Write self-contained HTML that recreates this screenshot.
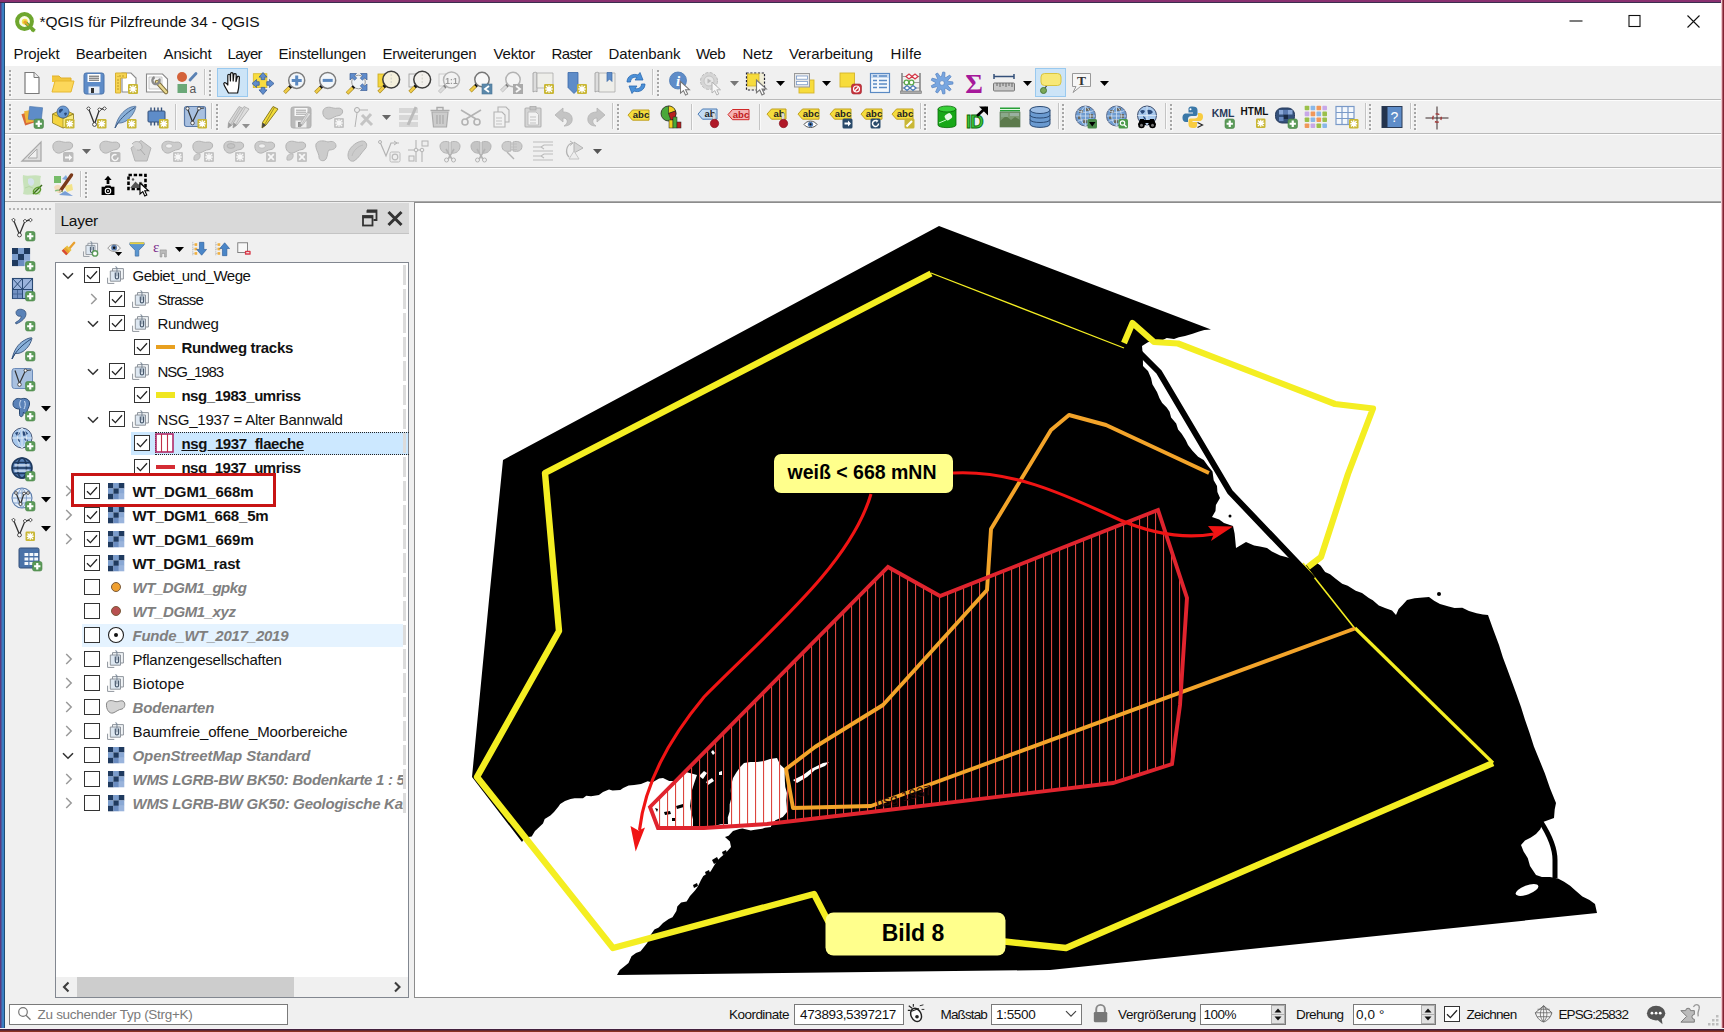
<!DOCTYPE html>
<html lang="de">
<head>
<meta charset="utf-8">
<title>QGIS für Pilzfreunde 34 - QGIS</title>
<style>
*{box-sizing:border-box;margin:0;padding:0}
html,body{width:1724px;height:1032px;overflow:hidden;background:#fff}
body{position:relative;font-family:"Liberation Sans","DejaVu Sans",sans-serif;font-size:15px;color:#000}
.abs{position:absolute}
svg{overflow:visible}
.tx{position:absolute;white-space:nowrap;color:#111}
#deskL{left:0;top:0;width:5px;height:1032px;background:linear-gradient(90deg,#5a3a80 0,#5a3a80 1.300px,#3a7cc0 1.700px,#3a80c4 3.700px,#1e4c74 4px,#1e4c74 4.600px,#d8ecf8 5px)}
#deskL2{left:0;top:0;width:0;height:0}
#deskT{left:0;top:0;width:1724px;height:3px;background:linear-gradient(#8a3070 0,#8a3070 1.800px,#3a2e50 2.100px,#3a2e50 2.800px,#e8e8f0 3px)}
#deskR{left:1721px;top:0;width:3px;height:1032px;background:linear-gradient(90deg,#f4dce0 0,#e8b0b8 1.200px,#8a2838 1.700px,#7a2030 3px)}
#deskR2{left:0;top:0;width:0;height:0}
#deskB{left:0;top:1028px;width:1724px;height:4px;background:linear-gradient(#f6f0f4 0,#f6f0f4 .800px,#3e2140 1.200px,#4a2238 2.200px,#8a3222 3px,#8a3222 4px)}
#title{left:5px;top:3px;width:1716px;height:37px;background:#fff}
#menu{left:5px;top:40px;width:1716px;height:26px;background:#fff}
.tb{left:5px;width:1716px;background:#f0f0f0}
#tb1{top:66px;height:33px}
#tb2{top:99px;height:34px;border-top:1px solid #b9b9b9;background:linear-gradient(#fdfdfd 0,#fdfdfd 1px,#f0f0f0 1px)}
#tb3{top:133px;height:34px;border-top:1px solid #b9b9b9;background:linear-gradient(#fdfdfd 0,#fdfdfd 1px,#f0f0f0 1px)}
#tb4{top:167px;height:35px;border-top:1px solid #b9b9b9;border-bottom:1px solid #a8a8a8;background:linear-gradient(#fdfdfd 0,#fdfdfd 1px,#f0f0f0 1px)}
.hd{width:2px;background:repeating-linear-gradient(#a6a6a6 0,#a6a6a6 1.700px,transparent 1.700px,transparent 4px);box-shadow:1px 1px 0 rgba(255,255,255,.55)}
.hdh{height:2px;background:repeating-linear-gradient(90deg,#b4b4b4 0,#b4b4b4 2px,transparent 2px,transparent 4px)}
.sel{background:#cce4f7;border:1px solid #99c9ef}
#main{left:5px;top:202px;width:1716px;height:796px;background:#f0f0f0}
#lyhead{left:55px;top:203px;width:354px;height:31px;background:#d9d9d9;border-bottom:1px solid #c4c4c4}
#tree{left:55px;top:262px;width:354px;height:736px;background:#fff;border:1px solid #828790}
#treeclip{left:56px;top:263px;width:346.500px;height:712px;overflow:hidden}
#treeclip>*{margin-left:-56px;margin-top:-263px}
#indic{left:403px;top:265px;width:3px;height:550px;background:repeating-linear-gradient(#dcdcdc 0,#dcdcdc 20px,transparent 20px,transparent 24px)}
#hsb{left:56px;top:977px;width:352px;height:20px;background:#f0f0f0}
.cb{width:16px;height:16px;background:#fff;border:1px solid #333}
#map{left:414px;top:202px;width:1307px;height:796px;background:#fff;border:1px solid #8c8c8c;border-right:none;overflow:hidden}
#status{left:5px;top:998px;width:1716px;height:31px;background:#f0f0f0}
.box{background:#fff;border:1px solid #7a7a7a}
</style>
</head>
<body>
<div class="abs" id="title"></div>
<svg class="abs" style="left:14.500px;top:11.800px" width="22" height="20" viewBox="0 0 22 20"><circle cx="9.500" cy="9.500" r="7.400" fill="#fbfbe8" stroke="#6ea62e" stroke-width="4"/><circle cx="9.800" cy="9.800" r="3" fill="#f2e24a"/><circle cx="10.200" cy="10.200" r="1.800" fill="#eaa22a"/><path d="M11,11 L19.500,19.200" stroke="#6ea62e" stroke-width="3.800"/><path d="M16,16 v3.200 h4.500z" fill="#6ea62e"/><path d="M10.500,10.500 L13.500,13.500" stroke="#eaa22a" stroke-width="1.600"/></svg>
<span class="tx " style="left:39.5px;top:11.8px;height:20px;line-height:20px;font-size:15.500px;letter-spacing:-0.101px;">*QGIS für Pilzfreunde 34 - QGIS</span>
<svg class="abs" style="left:1560px;top:8px" width="150" height="26" viewBox="0 0 150 26"><path d="M9.500,13h13" stroke="#111" stroke-width="1.100"/><rect x="69" y="7.500" width="11" height="11" fill="none" stroke="#111" stroke-width="1.100"/><path d="M127.500,7.500l12,12M139.500,7.500l-12,12" stroke="#111" stroke-width="1.100"/></svg>
<div class="abs" id="menu"></div>
<span class="tx " style="left:13.6px;top:43.5px;height:20px;line-height:20px;font-size:15px;letter-spacing:-0.113px;">Projekt</span>
<span class="tx " style="left:75.7px;top:43.5px;height:20px;line-height:20px;font-size:15px;letter-spacing:-0.126px;">Bearbeiten</span>
<span class="tx " style="left:163.6px;top:43.5px;height:20px;line-height:20px;font-size:15px;letter-spacing:-0.186px;">Ansicht</span>
<span class="tx " style="left:227.6px;top:43.5px;height:20px;line-height:20px;font-size:15px;letter-spacing:-0.626px;">Layer</span>
<span class="tx " style="left:278.5px;top:43.5px;height:20px;line-height:20px;font-size:15px;letter-spacing:-0.198px;">Einstellungen</span>
<span class="tx " style="left:382.5px;top:43.5px;height:20px;line-height:20px;font-size:15px;letter-spacing:-0.210px;">Erweiterungen</span>
<span class="tx " style="left:493.5px;top:43.5px;height:20px;line-height:20px;font-size:15px;letter-spacing:-0.172px;">Vektor</span>
<span class="tx " style="left:551.5px;top:43.5px;height:20px;line-height:20px;font-size:15px;letter-spacing:-0.615px;">Raster</span>
<span class="tx " style="left:608.5px;top:43.5px;height:20px;line-height:20px;font-size:15px;letter-spacing:-0.062px;">Datenbank</span>
<span class="tx " style="left:696px;top:43.5px;height:20px;line-height:20px;font-size:15px;letter-spacing:-0.526px;">Web</span>
<span class="tx " style="left:742.5px;top:43.5px;height:20px;line-height:20px;font-size:15px;letter-spacing:-0.086px;">Netz</span>
<span class="tx " style="left:789px;top:43.5px;height:20px;line-height:20px;font-size:15px;letter-spacing:-0.090px;">Verarbeitung</span>
<span class="tx " style="left:890.5px;top:43.5px;height:20px;line-height:20px;font-size:15px;letter-spacing:0.297px;">Hilfe</span>
<div class="abs tb" id="tb1"></div><div class="abs tb" id="tb2"></div><div class="abs tb" id="tb3"></div><div class="abs tb" id="tb4"></div>
<div class="abs hd" style="left:9.3px;top:70.3px;height:26px"></div>
<svg class="abs" style="left:20px;top:70.5px" width="24" height="24" viewBox="0 0 24 24"><path d="M5,1.5 h9 l5,5 v16 h-14z" fill="#fff" stroke="#7a7a7a" stroke-width="1.2"/><path d="M14,1.5 v5 h5" fill="#eee" stroke="#7a7a7a" stroke-width="1"/></svg>
<svg class="abs" style="left:51px;top:70.5px" width="24" height="24" viewBox="0 0 24 24"><path d="M1,5 h7 l2,2 h10 v4 h-19z" fill="#f2c63c"/><path d="M1,5 h7 l2,2 h10 v3" fill="none" stroke="#e0b02c" stroke-width="1"/><path d="M1,21 l3,-11 h19 l-3,11z" fill="#fcd75a" stroke="#e6b830" stroke-width="1"/></svg>
<svg class="abs" style="left:82px;top:70.5px" width="24" height="24" viewBox="0 0 24 24"><rect x="2" y="2" width="20" height="21" rx="2.2" fill="#5e8cc8" stroke="#4a73aa" stroke-width="1"/><rect x="5.5" y="3" width="13" height="8" fill="#fff"/><path d="M7,5.2h10M7,7.2h10M7,9.2h10" stroke="#555" stroke-width="1"/><rect x="6.5" y="15.5" width="11" height="7" fill="#e8eef6"/><rect x="9" y="17" width="3" height="5" fill="#333"/></svg>
<svg class="abs" style="left:113.5px;top:70.5px" width="24" height="24" viewBox="0 0 24 24"><path d="M8,2 h9 l5,5 v14 h-14z" fill="#fff" stroke="#8a8a8a" stroke-width="1.1"/><path d="M1.5,2 h11 v5 h-6 v15 h-5z" fill="#f6d452" stroke="#d8b030" stroke-width="1"/><path d="M4,5v1M4,8v0M3,9h2M3,12h2M3,15h2M3,18h2M6,4v2M9,4v2" stroke="#b08a20" stroke-width=".8"/><rect x="14" y="13" width="10" height="10" rx="1.2" fill="#c9b735"/><path d="M19,14.3 v7.4 M15.3,18 h7.4 M16,15 l6,6 M22,15 l-6,6" stroke="#fff" stroke-width="1.3" fill="none"/></svg>
<svg class="abs" style="left:144.5px;top:70.5px" width="24" height="24" viewBox="0 0 24 24"><path d="M1.5,3 h16 l5,5 v13 h-21z" fill="#fff" stroke="#8a8a8a" stroke-width="1.1"/><path d="M4,6h13v12h-13z" fill="#f4f4f4" stroke="#bbb" stroke-width=".8"/><path d="M12,11 L21,21" stroke="#7a6a3a" stroke-width="4.4" stroke-linecap="round"/><path d="M12,11 L21,21" stroke="#e8d890" stroke-width="2.6" stroke-linecap="round"/><circle cx="11" cy="9.5" r="3.6" fill="none" stroke="#8a8a8a" stroke-width="2.4" stroke-dasharray="17 6" transform="rotate(-30 11 9.5)"/></svg>
<svg class="abs" style="left:175px;top:70.5px" width="24" height="24" viewBox="0 0 24 24"><circle cx="7" cy="6" r="5" fill="#d4623a"/><path d="M15,9 L21,2.5" stroke="#5a82b4" stroke-width="2.8" stroke-linecap="round"/><rect x="2.5" y="13" width="9.5" height="9" fill="#6aa878"/><text x="14.5" y="22" font-size="12" font-family="Liberation Sans,sans-serif" fill="#555">a</text></svg>
<div class="abs" style="left:204px;top:69px;width:1px;height:26px;background:#c4c4c4"></div><div class="abs" style="left:205px;top:69px;width:1px;height:26px;background:#fafafa"></div>
<div class="abs hd" style="left:209.3px;top:70.3px;height:26px"></div>
<div class="abs sel" style="left:217px;top:68px;width:31px;height:29px"></div>
<svg class="abs" style="left:220.5px;top:70.5px" width="24" height="24" viewBox="0 0 24 24"><path d="M7.5,22 C5,17 2.5,14 2.8,12.4 C3.3,11 5,11.5 6.8,14 L6.8,4.6 C6.8,2.8 9.2,2.8 9.2,4.6 L9.4,10 L9.6,3 C9.6,1.2 12,1.2 12,3 L12.2,10 L12.8,3.8 C12.9,2 15.3,2.2 15.2,4 L15,10.6 L16.2,6.2 C16.6,4.6 18.8,5.2 18.4,7 C17.8,11 18.6,14 16.6,22 Z" fill="#fff" stroke="#111" stroke-width="1.2" stroke-linejoin="round"/></svg>
<svg class="abs" style="left:251px;top:70.5px" width="24" height="24" viewBox="0 0 24 24"><rect x="2.300" y="2.700" width="13.600" height="13.900" fill="#f8dc3e" stroke="#d8b82a" stroke-width=".8"/><path transform="rotate(0 12 12.500)" d="M12,1.500 l4,4.600 h-2.200 v2.600 h-3.600 v-2.600 h-2.200z" fill="#5f8ccc" stroke="#3c5f96" stroke-width=".8"/><path transform="rotate(90 12 12.500)" d="M12,1.500 l4,4.600 h-2.200 v2.600 h-3.600 v-2.600 h-2.200z" fill="#5f8ccc" stroke="#3c5f96" stroke-width=".8"/><path transform="rotate(180 12 12.500)" d="M12,1.500 l4,4.600 h-2.200 v2.600 h-3.600 v-2.600 h-2.200z" fill="#5f8ccc" stroke="#3c5f96" stroke-width=".8"/><path transform="rotate(270 12 12.500)" d="M12,1.500 l4,4.600 h-2.200 v2.600 h-3.600 v-2.600 h-2.200z" fill="#5f8ccc" stroke="#3c5f96" stroke-width=".8"/><rect x="9" y="9.500" width="6" height="6" fill="#f8dc3e"/></svg>
<svg class="abs" style="left:282px;top:70.5px" width="24" height="24" viewBox="0 0 24 24"><path d="M9.38,14.72 L7.18,16.92" stroke="#111" stroke-width="3.400" stroke-linecap="butt"/><path d="M7.38,16.72 L2.48,21.62" stroke="#a88a20" stroke-width="3.600" stroke-linecap="butt"/><path d="M7.38,16.72 L2.78,21.32" stroke="#f0cc48" stroke-width="2.400" stroke-linecap="butt"/><circle cx="14.7" cy="9.4" r="8" fill="#f2f6fa" stroke="#7c7c7c" stroke-width="1.500"/><path d="M9.700,9.400h10M14.700,4.400v10" stroke="#5a88c0" stroke-width="3"/></svg>
<svg class="abs" style="left:313px;top:70.5px" width="24" height="24" viewBox="0 0 24 24"><path d="M9.38,14.72 L7.18,16.92" stroke="#111" stroke-width="3.400" stroke-linecap="butt"/><path d="M7.38,16.72 L2.48,21.62" stroke="#a88a20" stroke-width="3.600" stroke-linecap="butt"/><path d="M7.38,16.72 L2.78,21.32" stroke="#f0cc48" stroke-width="2.400" stroke-linecap="butt"/><circle cx="14.7" cy="9.4" r="8" fill="#f2f6fa" stroke="#7c7c7c" stroke-width="1.500"/><path d="M9.700,9.400h10" stroke="#5a88c0" stroke-width="3"/></svg>
<svg class="abs" style="left:344.5px;top:70.5px" width="24" height="24" viewBox="0 0 24 24"><circle cx="13.500" cy="11" r="6.800" fill="#eef2f6" stroke="#9a9a9a" stroke-width="1"/><path transform="rotate(0 13.500 11)" d="M5,2.500 h6.500 l-2.200,2.200 l2.400,2.400 l-2.100,2.100 l-2.400,-2.400 l-2.200,2.200z" fill="#5f8ccc" stroke="#3c5f96" stroke-width=".7"/><path transform="rotate(90 13.500 11)" d="M5,2.500 h6.500 l-2.200,2.200 l2.400,2.400 l-2.100,2.100 l-2.400,-2.400 l-2.200,2.200z" fill="#5f8ccc" stroke="#3c5f96" stroke-width=".7"/><path transform="rotate(180 13.500 11)" d="M5,2.500 h6.500 l-2.200,2.200 l2.400,2.400 l-2.100,2.100 l-2.400,-2.400 l-2.200,2.200z" fill="#5f8ccc" stroke="#3c5f96" stroke-width=".7"/><path d="M9,15.500 L7.500,17" stroke="#111" stroke-width="3.400"/><path d="M7.600,16.900 L2,22.500" stroke="#a88a20" stroke-width="3.600"/><path d="M7.600,16.900 L2.300,22.200" stroke="#f0cc48" stroke-width="2.400"/></svg>
<svg class="abs" style="left:375.5px;top:70.5px" width="24" height="24" viewBox="0 0 24 24"><rect x="2" y="3" width="11" height="13" fill="#f4d63e" stroke="#c8a820" stroke-width=".8"/><path d="M9.584,14.216 L7.384,16.416" stroke="#111" stroke-width="3.400" stroke-linecap="butt"/><path d="M7.584,16.216 L2.684,21.116" stroke="#a88a20" stroke-width="3.600" stroke-linecap="butt"/><path d="M7.584,16.216 L2.984,20.816" stroke="#f0cc48" stroke-width="2.400" stroke-linecap="butt"/><circle cx="15.2" cy="8.6" r="8.4" fill="#f4f0dc" stroke="#3c3c3c" stroke-width="1.500"/><path d="M15.200,3v11" stroke="#d0d0c8" stroke-width="1" stroke-dasharray="2 1.500"/></svg>
<svg class="abs" style="left:406.5px;top:70.5px" width="24" height="24" viewBox="0 0 24 24"><rect x="2" y="3" width="11" height="13" fill="#f0f0f0" stroke="#999" stroke-width=".8"/><path d="M9.584,14.216 L7.384,16.416" stroke="#111" stroke-width="3.400" stroke-linecap="butt"/><path d="M7.584,16.216 L2.684,21.116" stroke="#a88a20" stroke-width="3.600" stroke-linecap="butt"/><path d="M7.584,16.216 L2.984,20.816" stroke="#f0cc48" stroke-width="2.400" stroke-linecap="butt"/><circle cx="15.2" cy="8.6" r="8.4" fill="#f2f0ec" stroke="#3c3c3c" stroke-width="1.500"/><path d="M15.200,3v11" stroke="#d0d0c8" stroke-width="1" stroke-dasharray="2 1.500"/></svg>
<svg class="abs" style="left:437px;top:70.5px" width="24" height="24" viewBox="0 0 24 24"><g opacity=".5" style="filter:grayscale(1)"><rect x="2" y="3" width="10" height="12" fill="#f4f4f4" stroke="#999" stroke-width=".8"/><path d="M9.18,14.32 L6.98,16.52" stroke="#111" stroke-width="3.400" stroke-linecap="butt"/><path d="M7.18,16.32 L2.28,21.22" stroke="#a88a20" stroke-width="3.600" stroke-linecap="butt"/><path d="M7.18,16.32 L2.58,20.92" stroke="#f0cc48" stroke-width="2.400" stroke-linecap="butt"/><circle cx="14.5" cy="9" r="8" fill="#f2f6fa" stroke="#7c7c7c" stroke-width="1.500"/><text x="14.5" y="12.500" font-size="8.500" font-weight="bold" text-anchor="middle" font-family="Liberation Sans,sans-serif" fill="#444">1:1</text></g></svg>
<svg class="abs" style="left:468.5px;top:70.5px" width="24" height="24" viewBox="0 0 24 24"><path d="M8.272,13.228 L6.072,15.428" stroke="#111" stroke-width="3.400" stroke-linecap="butt"/><path d="M6.272,15.228 L1.372,20.128" stroke="#a88a20" stroke-width="3.600" stroke-linecap="butt"/><path d="M6.272,15.228 L1.672,19.828" stroke="#f0cc48" stroke-width="2.400" stroke-linecap="butt"/><circle cx="13" cy="8.5" r="7.2" fill="#f8f8f8" stroke="#777" stroke-width="1.500"/><rect x="13" y="13" width="10" height="10" fill="#5a88aa" stroke="#4a7696" stroke-width=".6"/><path d="M20,15 l-4,3 l4,3" stroke="#fff" stroke-width="1.8" fill="none"/></svg>
<svg class="abs" style="left:500px;top:70.5px" width="24" height="24" viewBox="0 0 24 24"><g opacity=".5" style="filter:grayscale(1)"><path d="M8.272,13.228 L6.072,15.428" stroke="#111" stroke-width="3.400" stroke-linecap="butt"/><path d="M6.272,15.228 L1.372,20.128" stroke="#a88a20" stroke-width="3.600" stroke-linecap="butt"/><path d="M6.272,15.228 L1.672,19.828" stroke="#f0cc48" stroke-width="2.400" stroke-linecap="butt"/><circle cx="13" cy="8.5" r="7.2" fill="#f8f8f8" stroke="#777" stroke-width="1.500"/><rect x="13" y="13" width="10" height="10" fill="#3d6f96"/><path d="M16,15 l4,3 l-4,3" stroke="#fff" stroke-width="1.8" fill="none"/></g></svg>
<svg class="abs" style="left:531px;top:70.5px" width="24" height="24" viewBox="0 0 24 24"><path d="M2,2 C4,1 5,1 6,2 V21 C5,20 4,20 2,21z" fill="#ddd" stroke="#999" stroke-width=".8"/><path d="M6,2 h16 v15 h-16z" fill="#eeeeea" stroke="#aaa" stroke-width=".8"/><rect x="13" y="13" width="10" height="10" rx="1.2" fill="#c9b735"/><path d="M18,14.3 v7.4 M14.3,18 h7.4 M15,15 l6,6 M21,15 l-6,6" stroke="#fff" stroke-width="1.3" fill="none"/></svg>
<svg class="abs" style="left:564px;top:70.5px" width="24" height="24" viewBox="0 0 24 24"><path d="M4,1.500 h10 v17 l-4,4 l-6,-6z" fill="#5e8cc8" stroke="#3a68a8" stroke-width=".8"/><rect x="13" y="13" width="10" height="10" rx="1.2" fill="#c9b735"/><path d="M18,14.3 v7.4 M14.3,18 h7.4 M15,15 l6,6 M21,15 l-6,6" stroke="#fff" stroke-width="1.3" fill="none"/></svg>
<svg class="abs" style="left:592.5px;top:70.5px" width="24" height="24" viewBox="0 0 24 24"><path d="M2,2 C4,1 5,1 6,2 V21 C5,20 4,20 2,21z" fill="#ddd" stroke="#999" stroke-width=".8"/><path d="M6,2 h16 v19 h-16z" fill="#eeeeea" stroke="#aaa" stroke-width=".8"/><path d="M14,1.500 h5 v9 l-2.500,-2.500 l-2.500,2.500z" fill="#5e8cc8" stroke="#3a68a8" stroke-width=".7"/></svg>
<svg class="abs" style="left:623.5px;top:70.5px" width="24" height="24" viewBox="0 0 24 24"><path d="M3,11 C3,5 9,2 14,4 L16,1.500 L19,9 L11,9 L13,6.500 C9,5.500 6.500,8 6.500,11z" fill="#4a90d8" stroke="#2a68b0" stroke-width=".8"/><path d="M21,13 C21,19 15,22 10,20 L8,22.500 L5,15 L13,15 L11,17.500 C15,18.500 17.500,16 17.500,13z" fill="#4a90d8" stroke="#2a68b0" stroke-width=".8"/></svg>
<div class="abs" style="left:652px;top:69px;width:1px;height:26px;background:#c4c4c4"></div><div class="abs" style="left:653px;top:69px;width:1px;height:26px;background:#fafafa"></div>
<div class="abs hd" style="left:657.3px;top:70.3px;height:26px"></div>
<svg class="abs" style="left:667.5px;top:70.5px" width="24" height="24" viewBox="0 0 24 24"><circle cx="10" cy="9.500" r="8.500" fill="#5e8cc8" stroke="#4a78b4" stroke-width=".8"/><text x="10" y="15" font-size="15" font-style="italic" font-weight="bold" text-anchor="middle" font-family="Liberation Serif,serif" fill="#fff">i</text><path transform="translate(12.5,10.5) scale(1.05)" d="M0,0 L0,11 L2.800,8.600 L4.800,13 L6.800,12 L4.800,7.800 L8.500,7.800z" fill="#fff" stroke="#777" stroke-width="1"/></svg>
<svg class="abs" style="left:698.5px;top:70.5px" width="24" height="24" viewBox="0 0 24 24"><g opacity=".5" style="filter:grayscale(1)"><circle cx="10" cy="10" r="8.500" fill="#bbb" stroke="#888" stroke-width="1" stroke-dasharray="3 1.500"/><circle cx="10" cy="10" r="5" fill="#ddd" stroke="#999"/><path d="M8.500,7.500v5l4,-2.500z" fill="#888"/><path transform="translate(13,11) scale(1)" d="M0,0 L0,11 L2.800,8.600 L4.800,13 L6.800,12 L4.800,7.800 L8.500,7.800z" fill="#fff" stroke="#777" stroke-width="1"/></g></svg>
<svg class="abs" style="left:745px;top:70.5px" width="24" height="24" viewBox="0 0 24 24"><rect x="1.500" y="2" width="18" height="17" fill="#f0e9b0" fill-opacity=".4" stroke="#223" stroke-width="1.200" stroke-dasharray="2.200 1.600"/><rect x="2.500" y="3" width="11.500" height="12" fill="#f7dc3c" stroke="#d4b428" stroke-width=".8"/><path transform="translate(11.5,9) scale(1.15)" d="M0,0 L0,11 L2.800,8.600 L4.800,13 L6.800,12 L4.800,7.800 L8.500,7.800z" fill="#fff" stroke="#777" stroke-width="1"/></svg>
<svg class="abs" style="left:791.5px;top:70.5px" width="24" height="24" viewBox="0 0 24 24"><rect x="7" y="9" width="15" height="13" fill="#f7dc3c" stroke="#d4b428" stroke-width=".9"/><rect x="2.500" y="2.500" width="15" height="13.500" fill="#e8e8e8" stroke="#999" stroke-width="1"/><rect x="4.500" y="5" width="11" height="3.200" fill="#fff" stroke="#7a9ac8" stroke-width=".8"/><rect x="4.500" y="10.500" width="11" height="3.200" fill="#fff" stroke="#7a9ac8" stroke-width=".8"/></svg>
<svg class="abs" style="left:838px;top:70.5px" width="24" height="24" viewBox="0 0 24 24"><rect x="2" y="2" width="14.500" height="14" fill="#f7dc3c" stroke="#d4b428" stroke-width=".9"/><rect x="13.500" y="13" width="10" height="10" rx="2.200" fill="#c8323c" stroke="#a02830" stroke-width=".6"/><circle cx="18.500" cy="18" r="3" fill="none" stroke="#fff" stroke-width="1.200"/><path d="M16.500,20 l4,-4" stroke="#fff" stroke-width="1.200"/></svg>
<svg class="abs" style="left:868px;top:70.5px" width="24" height="24" viewBox="0 0 24 24"><rect x="2.500" y="2.500" width="19" height="19" fill="#f4f8fc" stroke="#5a8ac4" stroke-width="1.200"/><rect x="3" y="3" width="18" height="4" fill="#c8daf0"/><path d="M5,5h4M11,5h8M5,9.500h4M11,9.500h8M5,13h4M11,13h8M5,16.500h4M11,16.500h8" stroke="#5a8ac4" stroke-width="1.300"/></svg>
<svg class="abs" style="left:899px;top:70.5px" width="24" height="24" viewBox="0 0 24 24"><path d="M3,2v19M21,2v19" stroke="#777" stroke-width="1.400"/><rect x="1.500" y="20" width="21" height="2.500" fill="#aaa" stroke="#777" stroke-width=".6"/><path d="M3,5.500h18M3,11.500h18M3,17h18" stroke="#888" stroke-width=".8"/><g fill="#fff" stroke-width="1.300"><path d="M7,5.500l3,-2.500l3,2.500l-3,2.500zM13,5.500l3,-2.500l3,2.500l-3,2.500z" stroke="#d43a4a"/><circle cx="7.500" cy="11.500" r="2.300" stroke="#5aa84a"/><circle cx="12.500" cy="11.500" r="2.300" stroke="#5aa84a"/><path d="M5,17l3,-2.500l3,2.500l-3,2.500zM11,17l3,-2.500l3,2.500l-3,2.500z" stroke="#4a78b4"/></g></svg>
<svg class="abs" style="left:930px;top:70.5px" width="24" height="24" viewBox="0 0 24 24"><polygon points="22.9,10.9 22.9,13.1 18.3,13.6 17.9,14.8 21.1,18.2 19.7,19.9 15.8,17.3 14.7,17.9 15.0,22.6 12.8,23.0 11.5,18.5 10.3,18.3 7.5,22.0 5.6,20.9 7.5,16.6 6.6,15.7 2.1,16.8 1.3,14.7 5.5,12.6 5.5,11.4 1.3,9.3 2.1,7.2 6.6,8.3 7.5,7.4 5.6,3.1 7.5,2.0 10.3,5.7 11.5,5.5 12.8,1.0 15.0,1.4 14.7,6.1 15.8,6.7 19.7,4.1 21.1,5.8 17.9,9.2 18.3,10.4" fill="#78a6e0" stroke="#5a86c4" stroke-width=".8" stroke-linejoin="round"/><circle cx="12" cy="12" r="2.400" fill="#f0f0f0" stroke="#5a86c4" stroke-width=".8"/></svg>
<svg class="abs" style="left:961.5px;top:70.5px" width="24" height="24" viewBox="0 0 24 24"><text x="12" y="21.500" font-size="27" font-weight="bold" text-anchor="middle" font-family="Liberation Serif,serif" fill="#a6189a">Σ</text></svg>
<svg class="abs" style="left:992px;top:70.5px" width="24" height="24" viewBox="0 0 24 24"><path d="M2,5.500h20M2,3v5M22,3v5" stroke="#34507a" stroke-width="1.500"/><rect x="1.500" y="12" width="21" height="8" rx="1" fill="#c8c8c8" stroke="#777" stroke-width="1"/><path d="M5,12v3M8,12v4M11,12v3M14,12v4M17,12v3M20,12v4" stroke="#666" stroke-width="1"/></svg>
<svg class="abs" style="left:729.5px;top:80.5px" width="9" height="5" viewBox="0 0 9 5"><path d="M0,0h9l-4.500,5z" fill="#777"/></svg>
<svg class="abs" style="left:776px;top:80.5px" width="9" height="5" viewBox="0 0 9 5"><path d="M0,0h9l-4.500,5z" fill="#000"/></svg>
<svg class="abs" style="left:821.5px;top:80.5px" width="9" height="5" viewBox="0 0 9 5"><path d="M0,0h9l-4.500,5z" fill="#000"/></svg>
<svg class="abs" style="left:1022.5px;top:80.5px" width="9" height="5" viewBox="0 0 9 5"><path d="M0,0h9l-4.500,5z" fill="#000"/></svg>
<div class="abs sel" style="left:1035px;top:68px;width:31px;height:29px"></div>
<svg class="abs" style="left:1038px;top:70.5px" width="24" height="24" viewBox="0 0 24 24"><path d="M10,13 L5.500,19" stroke="#444" stroke-width="1.200"/><rect x="3" y="2.500" width="20" height="12" rx="3.500" fill="#f7e878" stroke="#d8c440" stroke-width="1"/><circle cx="5.500" cy="19.500" r="3" fill="#7aa858" stroke="#4a7a3a" stroke-width="1"/></svg>
<svg class="abs" style="left:1069px;top:70.5px" width="24" height="24" viewBox="0 0 24 24"><path d="M3.500,2.500h18v13h-10l-7.500,6l3,-6h-3.500z" fill="#f6f6f6" stroke="#999" stroke-width="1"/><text x="12.500" y="13.500" font-size="13.500" font-weight="bold" text-anchor="middle" font-family="Liberation Serif,serif" fill="#333">T</text></svg>
<svg class="abs" style="left:1100px;top:80.5px" width="9" height="5" viewBox="0 0 9 5"><path d="M0,0h9l-4.500,5z" fill="#000"/></svg>
<div class="abs hd" style="left:9.3px;top:104.3px;height:26px"></div>
<svg class="abs" style="left:20px;top:105px" width="24" height="24" viewBox="0 0 24 24"><rect x="3" y="7" width="12" height="12" fill="#d86a3a" transform="rotate(-18 9 13)"/><rect x="5" y="5" width="12" height="12" fill="#f0b83a" transform="rotate(-10 11 11)"/><rect x="9" y="2" width="13" height="13" fill="#5e8cc8" stroke="#4a73aa" stroke-width=".6" transform="rotate(6 15 8)"/><rect x="14" y="14" width="9.5" height="9.5" rx="2" fill="#5a9a58" stroke="#4a8448" stroke-width=".6"/><path d="M18.75,15.6 v6.3 M15.6,18.75 h6.3" stroke="#fff" stroke-width="2.2" fill="none"/></svg>
<svg class="abs" style="left:51px;top:105px" width="24" height="24" viewBox="0 0 24 24"><path d="M1.500,9 L12,4 L22.500,9 V18 L12,23 L1.500,18z" fill="#f4d440" stroke="#8a7a20" stroke-width=".8"/><path d="M12,13.500 V23 L22.500,18 V9z" fill="#f8ea80" stroke="#8a7a20" stroke-width=".6"/><path d="M1.500,9 L12,13.500 L22.500,9" fill="none" stroke="#8a7a20" stroke-width=".7"/><circle cx="12" cy="7" r="6" fill="#6a9ad4" stroke="#3a5a8a" stroke-width=".7"/><path d="M8,5 q2,-2 4,-1 q0,2 -2,3 q-1,2 -2,0z M13,8 q2,-1 3,0 q0,2 -2,3z" fill="#2a4a7a"/><rect x="14" y="14" width="9.5" height="9.5" rx="1.2" fill="#c9b735"/><path d="M18.75,15.3 v6.9 M15.3,18.75 h6.9 M16,16 l5.5,5.5 M21.5,16 l-5.5,5.5" stroke="#fff" stroke-width="1.3" fill="none"/></svg>
<svg class="abs" style="left:82.5px;top:105px" width="24" height="24" viewBox="0 0 24 24"><path d="M5.500,3.500 L11.500,19 L16.500,4.500 L21,3.500" fill="none" stroke="#333" stroke-width="1.300"/><path d="M5.500,1.700l1.800,1.800l-1.800,1.800l-1.800,-1.800z M16.500,2.700l1.800,1.800l-1.800,1.800l-1.800,-1.800z M21.500,1.700l1.800,1.800l-1.800,1.800l-1.800,-1.800z" fill="#fff" stroke="#333" stroke-width=".9"/><circle cx="11.500" cy="19.500" r="1.900" fill="#fff" stroke="#333" stroke-width=".9"/><rect x="14" y="14" width="9.5" height="9.5" rx="1.2" fill="#c9b735"/><path d="M18.75,15.3 v6.9 M15.3,18.75 h6.9 M16,16 l5.5,5.5 M21.5,16 l-5.5,5.5" stroke="#fff" stroke-width="1.3" fill="none"/></svg>
<svg class="abs" style="left:113px;top:105px" width="24" height="24" viewBox="0 0 24 24"><path d="M2,23 C4,14 8,8 14,4 C18,1.500 22,1 23,1.500 C22,6 19,12 13,16 C9,18.500 6,18 5,18z" fill="#8ab0d8" stroke="#4a6a94" stroke-width=".8"/><path d="M2,23 C6,15 12,9 22,2.500" fill="none" stroke="#3a5a84" stroke-width="1"/><rect x="14" y="14" width="9.5" height="9.5" rx="1.2" fill="#c9b735"/><path d="M18.75,15.3 v6.9 M15.3,18.75 h6.9 M16,16 l5.5,5.5 M21.5,16 l-5.5,5.5" stroke="#fff" stroke-width="1.3" fill="none"/></svg>
<svg class="abs" style="left:145px;top:105px" width="24" height="24" viewBox="0 0 24 24"><rect x="3" y="6" width="17" height="11" rx="1" fill="#5e8cc8" stroke="#34507a" stroke-width="1"/><path d="M6,6v-3.500M9.500,6v-3.500M13,6v-3.500M16.500,6v-3.500M6,17v3.500M9.500,17v3.500M13,17v3.500" stroke="#34507a" stroke-width="1.400"/><rect x="14" y="14" width="9.5" height="9.5" rx="1.2" fill="#c9b735"/><path d="M18.75,15.3 v6.9 M15.3,18.75 h6.9 M16,16 l5.5,5.5 M21.5,16 l-5.5,5.5" stroke="#fff" stroke-width="1.3" fill="none"/></svg>
<div class="abs" style="left:175px;top:104px;width:1px;height:26px;background:#c4c4c4"></div><div class="abs" style="left:176px;top:104px;width:1px;height:26px;background:#fafafa"></div>
<svg class="abs" style="left:182.5px;top:105px" width="24" height="24" viewBox="0 0 24 24"><rect x="1.500" y="1.500" width="21" height="20" rx="2" fill="#a8c0e0" stroke="#5a7aa8" stroke-width="1.200"/><path d="M4.500,3.500 L9.500,17 L16,3.500 L21,3" fill="none" stroke="#333" stroke-width="1.200"/><circle cx="4.500" cy="3.500" r="1.600" fill="#fff" stroke="#333" stroke-width=".8"/><circle cx="16" cy="3.500" r="1.600" fill="#fff" stroke="#333" stroke-width=".8"/><circle cx="9.500" cy="18" r="1.800" fill="#fff" stroke="#333" stroke-width=".8"/><rect x="14.5" y="14" width="9.5" height="9.5" rx="1.2" fill="#c9b735"/><path d="M19.25,15.3 v6.9 M15.8,18.75 h6.9 M16.5,16 l5.5,5.5 M22,16 l-5.5,5.5" stroke="#fff" stroke-width="1.3" fill="none"/></svg>
<div class="abs" style="left:211px;top:103px;width:1px;height:26px;background:#c4c4c4"></div><div class="abs" style="left:212px;top:103px;width:1px;height:26px;background:#fafafa"></div>
<div class="abs hd" style="left:216.3px;top:104.3px;height:26px"></div>
<svg class="abs" style="left:227px;top:105px" width="24" height="24" viewBox="0 0 24 24"><g opacity=".5" style="filter:grayscale(1)"><g transform="translate(-3,0)"><path d="M15,1.500 L20,4 L8,20 L4,23 L4.500,17.500z" fill="#bbb" stroke="#777" stroke-width="1"/><path d="M4,23 L4.500,17.500 L8,20z" fill="#444"/><path d="M16.500,2.300 L7,19" stroke="#777" stroke-width=".8"/></g><g transform="translate(2,0)"><path d="M15,1.500 L20,4 L8,20 L4,23 L4.500,17.500z" fill="#ccc" stroke="#777" stroke-width="1"/><path d="M4,23 L4.500,17.500 L8,20z" fill="#444"/><path d="M16.500,2.300 L7,19" stroke="#777" stroke-width=".8"/></g><path d="M15,19h8l-4,4.500z" fill="#333"/></g></svg>
<svg class="abs" style="left:258px;top:105px" width="24" height="24" viewBox="0 0 24 24"><path d="M15,1.500 L20,4 L8,20 L4,23 L4.500,17.500z" fill="#f2dc38" stroke="#8a7a20" stroke-width="1"/><path d="M4,23 L4.500,17.500 L8,20z" fill="#444"/><path d="M16.500,2.300 L7,19" stroke="#8a7a20" stroke-width=".8"/></svg>
<svg class="abs" style="left:288.5px;top:105px" width="24" height="24" viewBox="0 0 24 24"><g opacity=".5" style="filter:grayscale(1)"><rect x="2" y="2" width="20" height="21" rx="2.2" fill="#5e8cc8" stroke="#4a73aa" stroke-width="1"/><rect x="5.5" y="3" width="13" height="8" fill="#fff"/><path d="M7,5.2h10M7,7.2h10M7,9.2h10" stroke="#555" stroke-width="1"/><rect x="6.5" y="15.5" width="11" height="7" fill="#e8eef6"/><rect x="9" y="17" width="3" height="5" fill="#333"/><path transform="translate(8,6) scale(.7)" d="M15,1.500 L20,4 L8,20 L4,23 L4.500,17.500z" fill="#ccc" stroke="#666" stroke-width="1"/><path transform="translate(8,6) scale(.7)" d="M4,23 L4.500,17.500 L8,20z" fill="#444"/><path transform="translate(8,6) scale(.7)" d="M16.500,2.300 L7,19" stroke="#666" stroke-width=".8"/></g></svg>
<svg class="abs" style="left:320.5px;top:105px" width="24" height="24" viewBox="0 0 24 24"><g opacity=".5" style="filter:grayscale(1)"><path d="M2,6 C3,2 8,1.500 12,3 C15,4 18,2 20.500,4 C23,6.500 21,10 18,10.500 C14,11 12,13 9,14 C5,15 1,11 2,6z" fill="#aaa" stroke="#777" stroke-width="1"/><rect x="13" y="13" width="10" height="10" rx="1.2" fill="#999"/><path d="M18,14.3 v7.4 M14.3,18 h7.4 M15,15 l6,6 M21,15 l-6,6" stroke="#fff" stroke-width="1.3" fill="none"/></g></svg>
<svg class="abs" style="left:352px;top:105px" width="24" height="24" viewBox="0 0 24 24"><g opacity=".5" style="filter:grayscale(1)"><circle cx="5" cy="5" r="2.500" fill="#eee" stroke="#666"/><path d="M5,8 L3,22 M8,5h8" stroke="#777" stroke-width="1"/><path d="M9,20 L19,9 M10,10 L20,20" stroke="#999" stroke-width="3"/></g></svg>
<svg class="abs" style="left:396.5px;top:105px" width="24" height="24" viewBox="0 0 24 24"><g opacity=".5" style="filter:grayscale(1)"><rect x="2" y="3" width="19" height="5" fill="#c8c0a0"/><rect x="2" y="10" width="19" height="5" fill="#c8c0a0"/><rect x="2" y="17" width="19" height="5" fill="#c8c0a0"/><path d="M19,2 L11,20" stroke="#888" stroke-width="3"/></g></svg>
<svg class="abs" style="left:427.5px;top:105px" width="24" height="24" viewBox="0 0 24 24"><g opacity=".5" style="filter:grayscale(1)"><path d="M4,7h16l-1.500,15h-13z" fill="#aaa" stroke="#666" stroke-width="1.200"/><path d="M2.500,5.500h19M9,5v-2.500h6v2.500" fill="none" stroke="#666" stroke-width="1.400"/><path d="M9,10v9M12,10v9M15,10v9" stroke="#666" stroke-width="1.200"/></g></svg>
<svg class="abs" style="left:459px;top:105px" width="24" height="24" viewBox="0 0 24 24"><g opacity=".5" style="filter:grayscale(1)"><path d="M2,5 L17,14 M22,5 L7,14" stroke="#777" stroke-width="1.600"/><circle cx="6" cy="17" r="3" fill="none" stroke="#777" stroke-width="1.600"/><circle cx="18" cy="17" r="3" fill="none" stroke="#777" stroke-width="1.600"/></g></svg>
<svg class="abs" style="left:490px;top:105px" width="24" height="24" viewBox="0 0 24 24"><g opacity=".5" style="filter:grayscale(1)"><path d="M8,2h8l3,3v12h-11z" fill="#eee" stroke="#777" stroke-width="1.100"/><path d="M4,7h8l3,3v12h-11z" fill="#f4f4f4" stroke="#777" stroke-width="1.100"/><path d="M6,13h6M6,16h6M6,19h6" stroke="#999" stroke-width="1"/></g></svg>
<svg class="abs" style="left:521px;top:105px" width="24" height="24" viewBox="0 0 24 24"><g opacity=".5" style="filter:grayscale(1)"><rect x="4" y="3" width="16" height="19" rx="1" fill="#bbb" stroke="#777" stroke-width="1.100"/><rect x="9" y="1.500" width="6" height="3.500" fill="#999" stroke="#666" stroke-width=".8"/><path d="M7,7h8l2.500,2.500v10.500h-10.500z" fill="#f4f4f4" stroke="#888" stroke-width=".9"/><path d="M9,12h6M9,15h6M9,18h6" stroke="#999" stroke-width="1"/></g></svg>
<svg class="abs" style="left:552px;top:105px" width="24" height="24" viewBox="0 0 24 24"><g opacity=".5" style="filter:grayscale(1)"><path d="M3,10 L11,3 V7 C18,7 21,11 20,16 C19,20 15,21 12,21 C16,19 17,13 11,13 V17z" fill="#999" stroke="#777" stroke-width=".8"/></g></svg>
<svg class="abs" style="left:583.5px;top:105px" width="24" height="24" viewBox="0 0 24 24"><g opacity=".5" style="filter:grayscale(1)"><path d="M21,10 L13,3 V7 C6,7 3,11 4,16 C5,20 9,21 12,21 C8,19 7,13 13,13 V17z" fill="#999" stroke="#777" stroke-width=".8"/></g></svg>
<svg class="abs" style="left:381.5px;top:114.5px" width="9" height="5" viewBox="0 0 9 5"><path d="M0,0h9l-4.500,5z" fill="#666"/></svg>
<div class="abs" style="left:612px;top:103px;width:1px;height:26px;background:#c4c4c4"></div><div class="abs" style="left:613px;top:103px;width:1px;height:26px;background:#fafafa"></div>
<div class="abs hd" style="left:617.3px;top:104.3px;height:26px"></div>
<svg class="abs" style="left:626.5px;top:105px" width="24" height="24" viewBox="0 0 24 24"><g transform="translate(0,1)"><path d="M1,9.100 L5.500,4 H22 V14.200 H5.500z" fill="#f4dc3c" stroke="#c0a020" stroke-width="1"/><text x="14" y="12.300" font-size="9.5" font-weight="bold" text-anchor="middle" font-family="Liberation Sans,sans-serif" fill="#222">abc</text></g></svg>
<svg class="abs" style="left:659px;top:105px" width="24" height="24" viewBox="0 0 24 24"><circle cx="9.500" cy="8.500" r="7.500" fill="#4aa83a" stroke="#222" stroke-width=".8"/><path d="M9.500,8.500 L9.500,1 A7.500,7.500 0 0 1 16.500,6z" fill="#f0d020" stroke="#222" stroke-width=".6"/><path d="M9.500,8.500 L16.500,6 A7.500,7.500 0 0 1 12,15.500z" fill="#b82020" stroke="#222" stroke-width=".6"/><rect x="10" y="15" width="4" height="8" fill="#f0d020" stroke="#222" stroke-width=".5"/><rect x="14" y="12" width="4" height="11" fill="#4aa83a" stroke="#222" stroke-width=".5"/><rect x="18" y="17" width="4" height="6" fill="#b82020" stroke="#222" stroke-width=".5"/></svg>
<div class="abs" style="left:691px;top:104px;width:1px;height:26px;background:#c4c4c4"></div><div class="abs" style="left:692px;top:104px;width:1px;height:26px;background:#fafafa"></div>
<svg class="abs" style="left:697px;top:105px" width="24" height="24" viewBox="0 0 24 24"><path d="M1,9.100 L5.500,4 H20 V14.200 H5.500z" fill="#c4dcf4" stroke="#4a7ab4" stroke-width="1"/><text x="13" y="12.300" font-size="9.5" font-weight="bold" text-anchor="middle" font-family="Liberation Sans,sans-serif" fill="#222">ab</text><rect x="15.800" y="8" width="2.400" height="8" rx="1.200" fill="#e8e8e8" stroke="#888" stroke-width=".5"/><circle cx="17.500" cy="18.500" r="4.200" fill="#b01828" stroke="#800c18" stroke-width=".6"/></svg>
<svg class="abs" style="left:727px;top:105px" width="24" height="24" viewBox="0 0 24 24"><g transform="translate(0,.5)"><path d="M1,9.100 L5.500,4 H22 V14.200 H5.500z" fill="#f4b4b4" stroke="#d02828" stroke-width="1"/><text x="14" y="12.300" font-size="9.5" font-weight="bold" text-anchor="middle" font-family="Liberation Sans,sans-serif" fill="#c01818">abc</text></g></svg>
<div class="abs" style="left:759px;top:104px;width:1px;height:26px;background:#c4c4c4"></div><div class="abs" style="left:760px;top:104px;width:1px;height:26px;background:#fafafa"></div>
<svg class="abs" style="left:766px;top:105px" width="24" height="24" viewBox="0 0 24 24"><path d="M1,9.100 L5.500,4 H20 V14.200 H5.500z" fill="#f4dc3c" stroke="#c0a020" stroke-width="1"/><text x="13" y="12.300" font-size="9.5" font-weight="bold" text-anchor="middle" font-family="Liberation Sans,sans-serif" fill="#222">ab</text><rect x="15.800" y="8" width="2.400" height="8" rx="1.200" fill="#e8e8e8" stroke="#888" stroke-width=".5"/><circle cx="17.500" cy="18.500" r="4.200" fill="#b01828" stroke="#800c18" stroke-width=".6"/></svg>
<svg class="abs" style="left:797px;top:105px" width="24" height="24" viewBox="0 0 24 24"><path d="M1,9.100 L5.500,4 H22 V14.200 H5.500z" fill="#f4dc3c" stroke="#c0a020" stroke-width="1"/><text x="14" y="12.300" font-size="9.5" font-weight="bold" text-anchor="middle" font-family="Liberation Sans,sans-serif" fill="#222">abc</text><path d="M7,19.500 C10,15 17,15 20,19.500 C17,23.500 10,23.500 7,19.500z" fill="#fff" stroke="#444" stroke-width=".9"/><circle cx="13.500" cy="19.300" r="2.600" fill="#4a78b4"/><circle cx="13.500" cy="19.300" r="1.100" fill="#111"/></svg>
<svg class="abs" style="left:828.5px;top:105px" width="24" height="24" viewBox="0 0 24 24"><path d="M1,9.100 L5.500,4 H22 V14.200 H5.500z" fill="#f4dc3c" stroke="#c0a020" stroke-width="1"/><text x="14" y="12.300" font-size="9.5" font-weight="bold" text-anchor="middle" font-family="Liberation Sans,sans-serif" fill="#222">abc</text><rect x="13.500" y="13.500" width="10" height="10" rx="1.500" fill="#2a4a6a"/><path d="M15.500,17.500h3.500v-2l3,3l-3,3v-2h-3.500z" fill="#fff"/></svg>
<svg class="abs" style="left:860px;top:105px" width="24" height="24" viewBox="0 0 24 24"><path d="M1,9.100 L5.500,4 H22 V14.200 H5.500z" fill="#f4dc3c" stroke="#c0a020" stroke-width="1"/><text x="14" y="12.300" font-size="9.5" font-weight="bold" text-anchor="middle" font-family="Liberation Sans,sans-serif" fill="#222">abc</text><rect x="10.500" y="13.500" width="10" height="10" rx="1.500" fill="#2a4a6a"/><path d="M18.500,18.500 a3,3 0 1 1 -1.500,-2.600" fill="none" stroke="#fff" stroke-width="1.500"/><path d="M16,14.500l2.500,1.200l-2,2z" fill="#fff"/></svg>
<svg class="abs" style="left:891px;top:105px" width="24" height="24" viewBox="0 0 24 24"><path d="M1,9.100 L5.500,4 H22 V14.200 H5.500z" fill="#f4dc3c" stroke="#c0a020" stroke-width="1"/><text x="14" y="12.300" font-size="9.5" font-weight="bold" text-anchor="middle" font-family="Liberation Sans,sans-serif" fill="#222">abc</text><rect x="13.500" y="13.500" width="10" height="10" rx="1.500" fill="#c9b735"/><path d="M15.500,21.500 L21,16" stroke="#fff" stroke-width="2.200"/></svg>
<div class="abs" style="left:919.5px;top:103px;width:1px;height:26px;background:#c4c4c4"></div><div class="abs" style="left:920.5px;top:103px;width:1px;height:26px;background:#fafafa"></div>
<div class="abs hd" style="left:924.3px;top:104.3px;height:26px"></div>
<svg class="abs" style="left:935px;top:105px" width="24" height="24" viewBox="0 0 24 24"><path d="M3,4 V20 C3,23.500 21,23.500 21,20 V4z" fill="#18a818" stroke="#0a6a0a" stroke-width=".8"/><ellipse cx="12" cy="4" rx="9" ry="3" fill="#38d038" stroke="#0a6a0a" stroke-width=".8"/><path d="M4,18 L11,15" stroke="#cfc" stroke-width="1"/><rect x="10" y="9" width="7" height="6" rx="2" fill="#e8f8e8" transform="rotate(-35 13 12)"/></svg>
<svg class="abs" style="left:966px;top:105px" width="24" height="24" viewBox="0 0 24 24"><text x="0" y="23" font-size="18.500" font-weight="bold" font-family="Liberation Sans,sans-serif" fill="#3cc83c" stroke="#0c6a0c" stroke-width=".9" letter-spacing="-1">ID</text><path d="M11,11 L20,2.500" stroke="#000" stroke-width="2.600"/><path d="M13,1.500h9v9z" fill="#000"/></svg>
<svg class="abs" style="left:997.5px;top:105px" width="24" height="24" viewBox="0 0 24 24"><rect x="2" y="2.500" width="20" height="4" fill="#28a038"/><rect x="2" y="4" width="20" height="1" fill="#e8f8e8"/><rect x="2" y="7" width="20" height="15" fill="#7f9a74" stroke="#4a6a4a" stroke-width=".6"/><path d="M2,16 L8,11 L13,15 L17,12 L22,15 V22 H2z" fill="#5c7a4c"/><rect x="3" y="8" width="7" height="4" fill="#8aa88a"/><rect x="12" y="8" width="9" height="3" fill="#9ab0a0"/></svg>
<svg class="abs" style="left:1028px;top:105px" width="24" height="24" viewBox="0 0 24 24"><path d="M2,5 V19 C2,23.500 22,23.500 22,19 V5z" fill="#6a9ad0" stroke="#2a4a74" stroke-width="1"/><ellipse cx="12" cy="5" rx="10" ry="3.500" fill="#9abce4" stroke="#2a4a74" stroke-width="1"/><path d="M2,10 C2,14 22,14 22,10 M2,14.500 C2,18.500 22,18.500 22,14.500" fill="none" stroke="#2a4a74" stroke-width="1"/></svg>
<div class="abs" style="left:1057.5px;top:103px;width:1px;height:26px;background:#c4c4c4"></div><div class="abs" style="left:1058.5px;top:103px;width:1px;height:26px;background:#fafafa"></div>
<div class="abs hd" style="left:1062.3px;top:104.3px;height:26px"></div>
<svg class="abs" style="left:1073.5px;top:105px" width="24" height="24" viewBox="0 0 24 24"><circle cx="11.500" cy="11" r="10" fill="#6f9cd0" stroke="#5a6a8a" stroke-width="1"/><path d="M5,5 h4v3h-4z M12,3 h4v3h-4z M4,11 h3v3h-3z M15,9 h4v4h-4z M9,14 h4v4h-4z M16,15 h3v3h-3z" fill="#6a6250" opacity=".85"/><path d="M1.500,11 h20 M11.500,1 v20 M11.500,1 C5,6 5,16 11.500,21 M11.500,1 C18,6 18,16 11.500,21 M3.500,5.500 C8,8 15,8 19.500,5.500 M3.500,16.500 C8,14 15,14 19.500,16.500" fill="none" stroke="#cfe0f2" stroke-width=".8"/><rect x="13.500" y="14" width="9.500" height="9.500" rx="1.500" fill="#4a8a4a"/><path d="M15,17h6.500l-3.250,4.500z" fill="#000"/></svg>
<svg class="abs" style="left:1104.5px;top:105px" width="24" height="24" viewBox="0 0 24 24"><circle cx="11.500" cy="11" r="10" fill="#6f9cd0" stroke="#5a6a8a" stroke-width="1"/><path d="M5,5 h4v3h-4z M12,3 h4v3h-4z M4,11 h3v3h-3z M15,9 h4v4h-4z M9,14 h4v4h-4z M16,15 h3v3h-3z" fill="#6a6250" opacity=".85"/><path d="M1.500,11 h20 M11.500,1 v20 M11.500,1 C5,6 5,16 11.500,21 M11.500,1 C18,6 18,16 11.500,21 M3.500,5.500 C8,8 15,8 19.500,5.500 M3.500,16.500 C8,14 15,14 19.500,16.500" fill="none" stroke="#cfe0f2" stroke-width=".8"/><rect x="13.500" y="14" width="9.500" height="9.500" rx="1.500" fill="#4a9a4a"/><circle cx="17.500" cy="18" r="2.200" fill="none" stroke="#fff" stroke-width="1.200"/><path d="M19,19.500l2.500,2.500" stroke="#fff" stroke-width="1.400"/></svg>
<svg class="abs" style="left:1135px;top:105px" width="24" height="24" viewBox="0 0 24 24"><circle cx="12" cy="10.500" r="9.500" fill="#a8c8ec" stroke="#3a4a6a" stroke-width="1"/><path d="M5,6 q3,-2 5,0 q-1,3 -3,3z M12,5 q4,-1 6,2 q-2,3 -5,2z M8,11 q3,1 3,4 q-2,0 -3,-4z" fill="#2a4a7a"/><path d="M2.500,10.500 h19 M12,1 v19" stroke="#e8f0f8" stroke-width=".7"/><path d="M5,14 h4 l2,6 h-8z M15,14 h4 l2,6 h-8z" fill="#000"/><circle cx="6.500" cy="20" r="3.300" fill="#000"/><circle cx="17.500" cy="20" r="3.300" fill="#000"/><rect x="9" y="15" width="6" height="3" fill="#000"/><circle cx="6.500" cy="20.300" r="1.500" fill="#777"/><circle cx="17.500" cy="20.300" r="1.500" fill="#777"/></svg>
<div class="abs" style="left:1165px;top:103px;width:1px;height:26px;background:#c4c4c4"></div><div class="abs" style="left:1166px;top:103px;width:1px;height:26px;background:#fafafa"></div>
<div class="abs hd" style="left:1170.3px;top:104.3px;height:26px"></div>
<svg class="abs" style="left:1180.5px;top:105px" width="24" height="24" viewBox="0 0 24 24"><path d="M11.500,1.500 C7,1.500 7.500,3.500 7.500,5.500 V7.500 H12 V8.500 H5 C2,8.500 1.500,11 1.500,13 C1.500,15 2.500,17 5,17 H7 V14 C7,12 8.500,11 10.500,11 H14.500 C16,11 16.500,10 16.500,8.500 V5 C16.500,2.500 14.500,1.500 11.500,1.500z" fill="#3a78a8"/><circle cx="9.500" cy="4.200" r="1" fill="#fff"/><path d="M12,23 C16.500,23 16,21 16,19 V17 H11.500 V16 H18.500 C21.500,16 22,13.500 22,11.500 C22,9.500 21,8 18.500,8 H17 V10.500 C17,12.500 15.500,13.500 13.500,13.500 H9.500 C8,13.500 7.500,14.500 7.500,16 V19.500 C7.500,22 9,23 12,23z" fill="#f8cc40"/><path d="M16.500,17.500 l5,2.500 l-5,2.500" fill="none" stroke="#222" stroke-width="1.200"/></svg>
<svg class="abs" style="left:1212px;top:105px" width="24" height="24" viewBox="0 0 24 24"><text x="11" y="11.500" font-size="10.500" font-weight="bold" text-anchor="middle" font-family="Liberation Sans,sans-serif" fill="#2a3a5a">KML</text><rect x="13" y="14" width="9.5" height="9.5" rx="2" fill="#5a9a58" stroke="#4a8448" stroke-width=".6"/><path d="M17.75,15.6 v6.3 M14.6,18.75 h6.3" stroke="#fff" stroke-width="2.2" fill="none"/></svg>
<svg class="abs" style="left:1242.5px;top:105px" width="24" height="24" viewBox="0 0 24 24"><text x="11.500" y="10" font-size="10" font-weight="bold" text-anchor="middle" font-family="Liberation Sans,sans-serif" fill="#111">HTML</text><rect x="13" y="13.5" width="9.5" height="9.5" rx="1.2" fill="#c9b735"/><path d="M17.75,14.8 v6.9 M14.3,18.25 h6.9 M15,15.5 l5.5,5.5 M20.5,15.5 l-5.5,5.5" stroke="#fff" stroke-width="1.3" fill="none"/></svg>
<svg class="abs" style="left:1273.5px;top:105px" width="24" height="24" viewBox="0 0 24 24"><rect x="1.500" y="3" width="19" height="15" rx="6.500" fill="#34507a" stroke="#24385a" stroke-width="1"/><rect x="5" y="5" width="4.500" height="4.500" fill="#8aa8d8"/><rect x="14" y="5" width="4.500" height="4.500" fill="#8aa8d8"/><rect x="9.500" y="9.500" width="4.500" height="4.500" fill="#1a2a44"/><rect x="5" y="12" width="4.500" height="4" fill="#6a8ac0"/><rect x="9.500" y="5" width="4.500" height="4.500" fill="#5a7ab0"/><rect x="14" y="14" width="9.5" height="9.5" rx="2" fill="#5a9a58" stroke="#4a8448" stroke-width=".6"/><path d="M18.75,15.6 v6.3 M15.6,18.75 h6.3" stroke="#fff" stroke-width="2.2" fill="none"/></svg>
<svg class="abs" style="left:1304px;top:105px" width="24" height="24" viewBox="0 0 24 24"><rect x="0.7" y="0.7" width="4.600" height="4.600" rx=".8" fill="#9ac04a"/><rect x="6.6" y="0.7" width="4.600" height="4.600" rx=".8" fill="#8ab8e8"/><rect x="12.5" y="0.7" width="4.600" height="4.600" rx=".8" fill="#f0985a"/><rect x="18.4" y="0.7" width="4.600" height="4.600" rx=".8" fill="#c8a8e8"/><rect x="0.7" y="6.6" width="4.600" height="4.600" rx=".8" fill="#c8a8e8"/><rect x="6.6" y="6.6" width="4.600" height="4.600" rx=".8" fill="#f0985a"/><rect x="12.5" y="6.6" width="4.600" height="4.600" rx=".8" fill="#8ab8e8"/><rect x="18.4" y="6.6" width="4.600" height="4.600" rx=".8" fill="#9ac04a"/><rect x="0.7" y="12.5" width="4.600" height="4.600" rx=".8" fill="#9ac04a"/><rect x="6.6" y="12.5" width="4.600" height="4.600" rx=".8" fill="#8ab8e8"/><rect x="12.5" y="12.5" width="4.600" height="4.600" rx=".8" fill="#f0985a"/><rect x="18.4" y="12.5" width="4.600" height="4.600" rx=".8" fill="#9ac04a"/><rect x="0.7" y="18.4" width="4.600" height="4.600" rx=".8" fill="#f0985a"/><rect x="6.6" y="18.4" width="4.600" height="4.600" rx=".8" fill="#c8a8e8"/><rect x="12.5" y="18.4" width="4.600" height="4.600" rx=".8" fill="#9ac04a"/><rect x="18.4" y="18.4" width="4.600" height="4.600" rx=".8" fill="#8ab8e8"/></svg>
<svg class="abs" style="left:1335px;top:105px" width="24" height="24" viewBox="0 0 24 24"><rect x="1" y="1.500" width="18" height="18" fill="#f4f8fc" stroke="#7a9ac8" stroke-width="1.200"/><path d="M7,1.500v18M13,1.500v18M1,7.500h18M1,13.500h18" stroke="#7a9ac8" stroke-width="1.200"/><rect x="14" y="14" width="9.5" height="9.5" rx="1.2" fill="#c9b735"/><path d="M18.75,15.3 v6.9 M15.3,18.75 h6.9 M16,16 l5.5,5.5 M21.5,16 l-5.5,5.5" stroke="#fff" stroke-width="1.3" fill="none"/></svg>
<div class="abs" style="left:1364.5px;top:103px;width:1px;height:26px;background:#c4c4c4"></div><div class="abs" style="left:1365.5px;top:103px;width:1px;height:26px;background:#fafafa"></div>
<div class="abs hd" style="left:1369.3px;top:104.3px;height:26px"></div>
<svg class="abs" style="left:1380px;top:105px" width="24" height="24" viewBox="0 0 24 24"><rect x="2" y="1.500" width="20" height="21" fill="#5e8cc8" stroke="#2a3a54" stroke-width="1"/><rect x="2" y="1.500" width="5.500" height="21" fill="#24344e"/><text x="14.500" y="17" font-size="14" text-anchor="middle" font-family="Liberation Sans,sans-serif" fill="#fff">?</text></svg>
<div class="abs" style="left:1409.5px;top:103px;width:1px;height:26px;background:#c4c4c4"></div><div class="abs" style="left:1410.5px;top:103px;width:1px;height:26px;background:#fafafa"></div>
<div class="abs hd" style="left:1414.3px;top:104.3px;height:26px"></div>
<svg class="abs" style="left:1425px;top:105.5px" width="24" height="24" viewBox="0 0 24 24"><path d="M12,0.500v23 M0.500,12h23" stroke="#3a2a2a" stroke-width="1"/><circle cx="12" cy="12" r="4.200" fill="none" stroke="#a03030" stroke-width="1.300" stroke-dasharray="4 2.600" stroke-dashoffset="2"/></svg>
<div class="abs hd" style="left:9.3px;top:138.3px;height:26px"></div>
<svg class="abs" style="left:19.5px;top:139px" width="24" height="24" viewBox="0 0 24 24"><g opacity=".5" style="filter:grayscale(1)"><path d="M2,22 L21,22 L21,3z" fill="#ccc" stroke="#666" stroke-width="1.300"/><path d="M8,19 h9 v-9z" fill="#f0f0f0" stroke="#666" stroke-width="1"/></g></svg>
<svg class="abs" style="left:51px;top:139px" width="24" height="24" viewBox="0 0 24 24"><g opacity=".5" style="filter:grayscale(1)"><path d="M2,6 C3,2 8,1.500 12,3 C15,4 18,2 20.500,4 C23,6.500 21,10 18,10.500 C14,11 12,13 9,14 C5,15 1,11 2,6z" fill="#aaa" stroke="#777" stroke-width="1"/><rect x="12" y="13" width="10.500" height="10" rx="1.500" fill="#888"/><path d="M14,17.500h4v-2.200l3.200,3.200l-3.200,3.200v-2.200h-4z" fill="#fff"/></g></svg>
<svg class="abs" style="left:97.5px;top:139px" width="24" height="24" viewBox="0 0 24 24"><g opacity=".5" style="filter:grayscale(1)"><path d="M2,6 C3,2 8,1.500 12,3 C15,4 18,2 20.500,4 C23,6.500 21,10 18,10.500 C14,11 12,13 9,14 C5,15 1,11 2,6z" fill="#aaa" stroke="#777" stroke-width="1"/><rect x="12" y="13" width="10.500" height="10" rx="1.500" fill="#888"/><path d="M20,18.500 a3,3 0 1 1 -1.500,-2.600" fill="none" stroke="#fff" stroke-width="1.500"/></g></svg>
<svg class="abs" style="left:128.5px;top:139px" width="24" height="24" viewBox="0 0 24 24"><g opacity=".5" style="filter:grayscale(1)"><path d="M12,1.500 L22,9 L18,22 L6,22 L2,9z" fill="#aaa" stroke="#777" stroke-width="1"/><path d="M3,5 C6,1 12,2 13,7 C14,10 11,12 8,11" fill="#bbb" stroke="#777" stroke-width="1"/><path d="M11,10 l5,6" stroke="#666" stroke-width="1"/></g></svg>
<svg class="abs" style="left:159.5px;top:139px" width="24" height="24" viewBox="0 0 24 24"><g opacity=".5" style="filter:grayscale(1)"><path d="M2,6 C3,2 8,1.500 12,3 C15,4 18,2 20.500,4 C23,6.500 21,10 18,10.500 C14,11 12,13 9,14 C5,15 1,11 2,6z" fill="#aaa" stroke="#777" stroke-width="1"/><ellipse cx="9" cy="7" rx="3.500" ry="2.200" fill="#f0f0f0" stroke="#777" stroke-width=".7"/><rect x="13" y="13" width="10" height="10" rx="1.2" fill="#999"/><path d="M18,14.3 v7.4 M14.3,18 h7.4 M15,15 l6,6 M21,15 l-6,6" stroke="#fff" stroke-width="1.3" fill="none"/></g></svg>
<svg class="abs" style="left:190.5px;top:139px" width="24" height="24" viewBox="0 0 24 24"><g opacity=".5" style="filter:grayscale(1)"><path d="M2,6 C3,2 8,1.500 12,3 C15,4 18,2 20.500,4 C23,6.500 21,10 18,10.500 C14,11 12,13 9,14 C5,15 1,11 2,6z" fill="#aaa" stroke="#777" stroke-width="1"/><path d="M3,21 C2,16 6,14 9,15 C10,19 7,22 3,21z" fill="#aaa" stroke="#777" stroke-width=".8"/><rect x="13" y="13" width="10" height="10" rx="1.2" fill="#999"/><path d="M18,14.3 v7.4 M14.3,18 h7.4 M15,15 l6,6 M21,15 l-6,6" stroke="#fff" stroke-width="1.3" fill="none"/></g></svg>
<svg class="abs" style="left:221.5px;top:139px" width="24" height="24" viewBox="0 0 24 24"><g opacity=".5" style="filter:grayscale(1)"><path d="M2,6 C3,2 8,1.500 12,3 C15,4 18,2 20.500,4 C23,6.500 21,10 18,10.500 C14,11 12,13 9,14 C5,15 1,11 2,6z" fill="#aaa" stroke="#777" stroke-width="1"/><ellipse cx="9" cy="7" rx="4" ry="2.400" fill="#999" stroke="#666" stroke-width=".7"/><rect x="13" y="13" width="10" height="10" rx="1.2" fill="#999"/><path d="M18,14.3 v7.4 M14.3,18 h7.4 M15,15 l6,6 M21,15 l-6,6" stroke="#fff" stroke-width="1.3" fill="none"/></g></svg>
<svg class="abs" style="left:252.5px;top:139px" width="24" height="24" viewBox="0 0 24 24"><g opacity=".5" style="filter:grayscale(1)"><path d="M2,6 C3,2 8,1.500 12,3 C15,4 18,2 20.500,4 C23,6.500 21,10 18,10.500 C14,11 12,13 9,14 C5,15 1,11 2,6z" fill="#aaa" stroke="#777" stroke-width="1"/><ellipse cx="9" cy="7" rx="3.500" ry="2.200" fill="#f0f0f0" stroke="#777" stroke-width=".7"/><rect x="13" y="13" width="10" height="10" rx="1.200" fill="#999"/><path d="M15.2,15.2 l5.6,5.6 M20.8,15.2 l-5.6,5.6" stroke="#fff" stroke-width="1.800"/></g></svg>
<svg class="abs" style="left:283.5px;top:139px" width="24" height="24" viewBox="0 0 24 24"><g opacity=".5" style="filter:grayscale(1)"><path d="M2,6 C3,2 8,1.500 12,3 C15,4 18,2 20.500,4 C23,6.500 21,10 18,10.500 C14,11 12,13 9,14 C5,15 1,11 2,6z" fill="#aaa" stroke="#777" stroke-width="1"/><path d="M3,21 C2,16 6,14 9,15 C10,19 7,22 3,21z" fill="#aaa" stroke="#777" stroke-width=".8"/><rect x="13" y="13" width="10" height="10" rx="1.200" fill="#999"/><path d="M15.2,15.2 l5.6,5.6 M20.8,15.2 l-5.6,5.6" stroke="#fff" stroke-width="1.800"/></g></svg>
<svg class="abs" style="left:314px;top:139px" width="24" height="24" viewBox="0 0 24 24"><g opacity=".5" style="filter:grayscale(1)"><path d="M2,5 C4,1 10,1.500 14,3 C18,1.500 22,3 22,7 C22,10 18,11 15,11 C13,13 14,17 12,20 C10,23 5,22 5,18 C5,14 1,10 2,5z" fill="#aaa" stroke="#777" stroke-width="1"/></g></svg>
<svg class="abs" style="left:345px;top:139px" width="24" height="24" viewBox="0 0 24 24"><g opacity=".5" style="filter:grayscale(1)"><path d="M3,16 C3,10 10,3 17,2 C22,2 23,7 20,10 C16,14 14,19 9,22 C5,23 3,20 3,16z" fill="#aaa" stroke="#777" stroke-width="1"/><path d="M7,17 C8,12 13,7 18,6" fill="none" stroke="#888" stroke-width="1"/></g></svg>
<svg class="abs" style="left:376.5px;top:139px" width="24" height="24" viewBox="0 0 24 24"><g opacity=".5" style="filter:grayscale(1)"><path d="M3,3 L9,17 L14,4 h8" fill="none" stroke="#777" stroke-width="1.200"/><circle cx="3" cy="3" r="1.500" fill="#eee" stroke="#777"/><path d="M17,2l3,2l-3,2" fill="none" stroke="#777"/><rect x="13" y="13" width="10" height="10" rx="1.500" fill="#eee" stroke="#888"/><circle cx="18" cy="18" r="2.800" fill="none" stroke="#888" stroke-width="1.200"/></g></svg>
<svg class="abs" style="left:407px;top:139px" width="24" height="24" viewBox="0 0 24 24"><g opacity=".5" style="filter:grayscale(1)"><path d="M9,1v22 M1,11h13 M15,9v14" stroke="#777" stroke-width="1.100"/><rect x="15" y="2" width="6" height="5" fill="#eee" stroke="#777"/><rect x="2" y="17" width="5" height="5" fill="#eee" stroke="#777"/><circle cx="9" cy="11" r="1.800" fill="#eee" stroke="#777"/><circle cx="15" cy="11" r="1.800" fill="#eee" stroke="#777"/></g></svg>
<svg class="abs" style="left:438px;top:139px" width="24" height="24" viewBox="0 0 24 24"><g opacity=".5" style="filter:grayscale(1)"><path d="M2,7 C2,3 7,1.500 11,3 V14 C6,15 2,12 2,7z M22,7 C22,3 17,1.500 13,3 V14 C18,15 22,12 22,7z" fill="#aaa" stroke="#777" stroke-width="1"/><path d="M8,10 L15,22 M16,10 L9,22" stroke="#777" stroke-width="1.600"/><circle cx="8.500" cy="21" r="2" fill="#eee" stroke="#777"/><circle cx="15.500" cy="21" r="2" fill="#eee" stroke="#777"/></g></svg>
<svg class="abs" style="left:469px;top:139px" width="24" height="24" viewBox="0 0 24 24"><g opacity=".5" style="filter:grayscale(1)"><path d="M2,7 C2,3 7,1.500 11,3 V14 C6,15 2,12 2,7z M22,7 C22,3 17,1.500 13,3 V14 C18,15 22,12 22,7z" fill="#999" stroke="#777" stroke-width="1"/><path d="M8,10 L15,22 M16,10 L9,22" stroke="#777" stroke-width="1.600"/><circle cx="8.500" cy="21" r="2" fill="#eee" stroke="#777"/><circle cx="15.500" cy="21" r="2" fill="#eee" stroke="#777"/></g></svg>
<svg class="abs" style="left:500px;top:139px" width="24" height="24" viewBox="0 0 24 24"><g opacity=".5" style="filter:grayscale(1)"><path d="M2,7 C2,3 7,1.500 11,3 V12 C6,13 2,12 2,7z M22,7 C22,3 17,1.500 13,3 V12 C18,13 22,12 22,7z" fill="#aaa" stroke="#777" stroke-width="1"/><path d="M11,5h6M11,8h6M11,10.500h6" stroke="#888" stroke-width=".8"/><path d="M7,13 L14,20" stroke="#777" stroke-width="1.400"/></g></svg>
<svg class="abs" style="left:531px;top:139px" width="24" height="24" viewBox="0 0 24 24"><g opacity=".5" style="filter:grayscale(1)"><path d="M2,3h20M2,8h8l3,-2h9M2,12h20M2,17h8l3,-2h9M2,21h20M10,8l3,2M10,17l3,2" fill="none" stroke="#888" stroke-width="1.100"/></g></svg>
<svg class="abs" style="left:562px;top:139px" width="24" height="24" viewBox="0 0 24 24"><g opacity=".5" style="filter:grayscale(1)"><path d="M12,3 L21,9 L12,14z" fill="#bbb" stroke="#777" stroke-width="1"/><path d="M7,20 l5,-8 l5,8z" fill="#eee" stroke="#999" stroke-width="1"/><path d="M10,4 C4,6 3,14 7,18" fill="none" stroke="#777" stroke-width="1.300"/><path d="M8,2l3,2l-3,2.500" fill="none" stroke="#777" stroke-width="1"/></g></svg>
<svg class="abs" style="left:81.5px;top:149px" width="9" height="5" viewBox="0 0 9 5"><path d="M0,0h9l-4.500,5z" fill="#666"/></svg>
<svg class="abs" style="left:593px;top:149px" width="9" height="5" viewBox="0 0 9 5"><path d="M0,0h9l-4.500,5z" fill="#555"/></svg>
<div class="abs hd" style="left:9.3px;top:172.3px;height:26px"></div>
<svg class="abs" style="left:19.5px;top:172.5px" width="24" height="24" viewBox="0 0 24 24"><g opacity=".55"><path d="M3,2 C8,4 14,1 21,3 C19,9 22,15 20,22 C14,20 8,23 3,21 C5,15 2,9 3,2z" fill="#a8d890"/><path d="M8,6 C11,4 15,6 14,10 C13,14 9,13 8,10z" fill="#c0d8e8"/><path d="M5,15 q4,-3 8,0" stroke="#8ac070" fill="none"/></g><path d="M13,21 L22,12" stroke="#3a6a1a" stroke-width="1.400"/><ellipse cx="17" cy="17.500" rx="4" ry="2.600" fill="none" stroke="#5a9a2a" stroke-width="1.300" transform="rotate(-40 17 17.500)"/></svg>
<svg class="abs" style="left:51px;top:172.5px" width="24" height="24" viewBox="0 0 24 24"><g opacity=".8"><path d="M3,3h7v7h-7z" fill="#58b048"/><path d="M11,6 l4,-4 l3,6z" fill="#6a9ad8"/><path d="M3,14 C6,10 10,12 12,16 C10,21 5,22 3,14z" fill="#f4d8b0"/><path d="M13,13 l8,-2 l1,6 l-6,2z" fill="#f4e070"/><path d="M8,22 l6,-4 l8,5z" fill="#5a8ad0"/><path d="M4,18 q4,-2 8,1" stroke="#68b058" fill="none" stroke-width="1.200"/></g><path d="M20.500,2 L10,17" stroke="#7a3a1a" stroke-width="3.400" stroke-linecap="round"/><path d="M10,17 L8.500,20" stroke="#d8c8a8" stroke-width="2"/></svg>
<div class="abs" style="left:80px;top:171px;width:1px;height:26px;background:#c4c4c4"></div><div class="abs" style="left:81px;top:171px;width:1px;height:26px;background:#fafafa"></div>
<div class="abs hd" style="left:85.3px;top:172.3px;height:26px"></div>
<svg class="abs" style="left:97px;top:174px" width="22" height="22" viewBox="0 0 24 24"><path d="M12,2 l4,4.500 h-2.500 v4.500 h-3 v-4.500 h-2.500z" fill="#000"/><path d="M5,14 h3.500 l1,-1.500 h5 l1,1.500 h3.500 v9 h-14z" fill="#000"/><circle cx="12" cy="18.500" r="3" fill="none" stroke="#fff" stroke-width="1.200"/><circle cx="12" cy="18.500" r="1" fill="#fff"/></svg>
<svg class="abs" style="left:127px;top:172.5px" width="24" height="24" viewBox="0 0 24 24"><rect x="1.500" y="2" width="17" height="14" fill="#eee" stroke="#000" stroke-width="2.600" stroke-dasharray="3.400 1.800"/><path d="M3.500,14.500 l5,-6 l3,3 l2.500,-3 l3.500,5 v1.500h-14z" fill="#555"/><circle cx="6" cy="6.500" r="1.200" fill="#555"/><path transform="translate(13,10)" d="M0,0 L0,11 L2.800,8.600 L4.800,13 L6.800,12 L4.800,7.800 L8.500,7.800z" fill="#fff" stroke="#000" stroke-width="1.100"/></svg>
<div class="abs" id="main"></div>
<div class="abs hdh" style="left:9px;top:208px;width:42px"></div>
<svg class="abs" style="left:10.5px;top:216.5px" width="24" height="24" viewBox="0 0 24 24"><path d="M2.500,3 L8.500,17.500 L14,4 L19,3" fill="none" stroke="#333" stroke-width="1.300"/><path d="M2.500,1.200l1.800,1.800l-1.800,1.800l-1.800,-1.800z M14,2.200l1.800,1.800l-1.800,1.800l-1.800,-1.800z M19.500,1.200l1.800,1.800l-1.800,1.800l-1.800,-1.800z" fill="#fff" stroke="#333" stroke-width=".9"/><circle cx="8.500" cy="18" r="1.900" fill="#fff" stroke="#333" stroke-width=".9"/><rect x="14.5" y="14.5" width="9.5" height="9.5" rx="2" fill="#5a9a58" stroke="#4a8448" stroke-width=".6"/><path d="M19.25,16.1 v6.3 M16.1,19.25 h6.3" stroke="#fff" stroke-width="2.2" fill="none"/></svg>
<svg class="abs" style="left:10.5px;top:246.53px" width="24" height="24" viewBox="0 0 24 24"><rect x="1" y="1" width="6.1" height="6.1" fill="#1f3a5f"/><rect x="7" y="1" width="6.1" height="6.1" fill="#7a9ccc"/><rect x="13" y="1" width="6.1" height="6.1" fill="#1f3a5f"/><rect x="1" y="7" width="6.1" height="6.1" fill="#7a9ccc"/><rect x="7" y="7" width="6.1" height="6.1" fill="#1f3a5f"/><rect x="13" y="7" width="6.1" height="6.1" fill="#8aa8d4"/><rect x="1" y="13" width="6.1" height="6.1" fill="#1f3a5f"/><rect x="7" y="13" width="6.1" height="6.1" fill="#6a8cc0"/><rect x="13" y="13" width="6.1" height="6.1" fill="#9ab4dc"/><rect x="14.5" y="14.5" width="9.5" height="9.5" rx="2" fill="#5a9a58" stroke="#4a8448" stroke-width=".6"/><path d="M19.25,16.1 v6.3 M16.1,19.25 h6.3" stroke="#fff" stroke-width="2.2" fill="none"/></svg>
<svg class="abs" style="left:10.5px;top:276.56px" width="24" height="24" viewBox="0 0 24 24"><rect x="1.500" y="1.500" width="20" height="20" fill="#9ab4dc" stroke="#2a4a74" stroke-width="1.100"/><path d="M1.500,12.500h20M11.500,1.500v20M1.500,1.500l10,11M11.500,1.500l-10,11M11.500,12.500l10,-11M6.500,12.500v9M1.500,17h10" stroke="#2a4a74" stroke-width="1"/><rect x="2" y="13" width="9" height="8.500" fill="#5a7ab0" opacity=".6"/><rect x="14.5" y="14.5" width="9.5" height="9.5" rx="2" fill="#5a9a58" stroke="#4a8448" stroke-width=".6"/><path d="M19.25,16.1 v6.3 M16.1,19.25 h6.3" stroke="#fff" stroke-width="2.2" fill="none"/></svg>
<svg class="abs" style="left:10.5px;top:306.59px" width="24" height="24" viewBox="0 0 24 24"><path d="M5,5.500 C5,2 11,1 14,4 C17,8 13,14 5,17 L4.500,15.500 C9,13 10.500,10.500 10,9 C7,10 5,8 5,5.500z" fill="#5a82b8" stroke="#34507a" stroke-width=".8"/><rect x="14.5" y="14.5" width="9.5" height="9.5" rx="2" fill="#5a9a58" stroke="#4a8448" stroke-width=".6"/><path d="M19.25,16.1 v6.3 M16.1,19.25 h6.3" stroke="#fff" stroke-width="2.2" fill="none"/></svg>
<svg class="abs" style="left:10.5px;top:336.62px" width="24" height="24" viewBox="0 0 24 24"><path d="M1,22 C3,13 7,7 13,3.500 C17,1 20,0.500 21,1 C20,6 17,11 12,14.500 C8,17 5,16.500 4,16.500z" fill="#8ab0d8" stroke="#34507a" stroke-width=".9"/><path d="M1,22 C5,14 11,8 20,2" fill="none" stroke="#2a4a74" stroke-width="1"/><rect x="14.5" y="14.5" width="9.5" height="9.5" rx="2" fill="#5a9a58" stroke="#4a8448" stroke-width=".6"/><path d="M19.25,16.1 v6.3 M16.1,19.25 h6.3" stroke="#fff" stroke-width="2.2" fill="none"/></svg>
<svg class="abs" style="left:10.5px;top:366.65px" width="24" height="24" viewBox="0 0 24 24"><rect x="1" y="1.500" width="20.500" height="20" rx="2.500" fill="#a8c0e0" stroke="#6a8ab8" stroke-width="1"/><path d="M4,3.500 L8.500,16.500 L14.500,3.500 L20,3" fill="none" stroke="#333" stroke-width="1.200"/><circle cx="8.500" cy="17.500" r="1.800" fill="#fff" stroke="#333" stroke-width=".8"/><circle cx="14.500" cy="3.500" r="1.500" fill="#fff" stroke="#333" stroke-width=".8"/><rect x="14.5" y="14.5" width="9.5" height="9.5" rx="2" fill="#5a9a58" stroke="#4a8448" stroke-width=".6"/><path d="M19.25,16.1 v6.3 M16.1,19.25 h6.3" stroke="#fff" stroke-width="2.2" fill="none"/></svg>
<svg class="abs" style="left:10.5px;top:396.68px" width="24" height="24" viewBox="0 0 24 24"><path d="M2,7 C2,2 7,0.500 10,2 C13,0.500 19,1.500 18.500,7 C18,11 16.500,12 16,14.500 C15.500,17 13,17 12.500,15 L12,18 C11.500,20.500 8.500,20 8.500,17.500 V12 C5,12 2,10.500 2,7z" fill="#5a82b8" stroke="#2a4a74" stroke-width="1"/><path d="M10,3 C8,6 8.500,9 10,11 M13.500,4 C15,7 14,10 13,12" fill="none" stroke="#d0e0f4" stroke-width="1"/><rect x="14.5" y="14.5" width="9.5" height="9.5" rx="2" fill="#5a9a58" stroke="#4a8448" stroke-width=".6"/><path d="M19.25,16.1 v6.3 M16.1,19.25 h6.3" stroke="#fff" stroke-width="2.2" fill="none"/></svg>
<svg class="abs" style="left:10.5px;top:426.71px" width="24" height="24" viewBox="0 0 24 24"><circle cx="11" cy="11" r="10" fill="#a8c8ec" stroke="#4a5a7a" stroke-width="1"/><path d="M4,6 q3,-2 5,0 q-1,3 -3,3z M11,4.500 q4,-1 6,2 q-2,3 -5,2z M6,11 q3,1 3,4 q-2,0 -3,-4z M13,11 q3,0 4,3 q-3,1 -4,-3z" fill="#2a4a7a"/><path d="M1,11 h20 M11,1 v20 M11,1 C5,6 5,16 11,21 M11,1 C17,6 17,16 11,21" fill="none" stroke="#e8f0f8" stroke-width=".8"/><rect x="14.5" y="14.5" width="9.5" height="9.5" rx="2" fill="#5a9a58" stroke="#4a8448" stroke-width=".6"/><path d="M19.25,16.1 v6.3 M16.1,19.25 h6.3" stroke="#fff" stroke-width="2.2" fill="none"/></svg>
<svg class="abs" style="left:10.5px;top:456.74px" width="24" height="24" viewBox="0 0 24 24"><circle cx="11" cy="11" r="10" fill="#5a82b8" stroke="#1f3a5f" stroke-width="1.600"/><path d="M1,11h20M3,5.500h16M3,16.500h16" stroke="#1f3a5f" stroke-width="1.600"/><ellipse cx="11" cy="11" rx="4.500" ry="10" fill="none" stroke="#1f3a5f" stroke-width="1.600"/><path d="M3.500,7h15v2.500h-15z M3.500,12.500h15v2.500h-15z" fill="#dce8f8" opacity=".75"/><rect x="14.5" y="14.5" width="9.5" height="9.5" rx="2" fill="#5a9a58" stroke="#4a8448" stroke-width=".6"/><path d="M19.25,16.1 v6.3 M16.1,19.25 h6.3" stroke="#fff" stroke-width="2.2" fill="none"/></svg>
<svg class="abs" style="left:10.5px;top:486.77px" width="24" height="24" viewBox="0 0 24 24"><circle cx="11" cy="11" r="10" fill="#e4eef8" stroke="#5a7aa8" stroke-width="1.100"/><path d="M1,11h20M2.500,6h17M2.500,16h17M11,1v20M11,1C5,6 5,16 11,21M11,1C17,6 17,16 11,21" fill="none" stroke="#7a9ac8" stroke-width=".9"/><path d="M5,6 L9.500,17 L13,6.500 L17,6" fill="none" stroke="#333" stroke-width="1.200"/><circle cx="5" cy="6" r="1.400" fill="#fff" stroke="#333" stroke-width=".8"/><circle cx="13" cy="6.500" r="1.400" fill="#fff" stroke="#333" stroke-width=".8"/><circle cx="17" cy="6" r="1.400" fill="#fff" stroke="#333" stroke-width=".8"/><circle cx="9.500" cy="17" r="1.500" fill="#fff" stroke="#333" stroke-width=".8"/><rect x="14.5" y="14.5" width="9.5" height="9.5" rx="2" fill="#5a9a58" stroke="#4a8448" stroke-width=".6"/><path d="M19.25,16.1 v6.3 M16.1,19.25 h6.3" stroke="#fff" stroke-width="2.2" fill="none"/></svg>
<svg class="abs" style="left:10.5px;top:516.8px" width="24" height="24" viewBox="0 0 24 24"><path d="M2.500,3 L8.500,17.500 L14,4 L19,3" fill="none" stroke="#333" stroke-width="1.300"/><path d="M2.500,1.200l1.800,1.800l-1.800,1.800l-1.800,-1.800z M14,2.200l1.800,1.800l-1.800,1.800l-1.800,-1.800z M19.500,1.200l1.800,1.800l-1.800,1.800l-1.800,-1.800z" fill="#fff" stroke="#333" stroke-width=".9"/><circle cx="8.500" cy="18" r="1.900" fill="#fff" stroke="#333" stroke-width=".9"/><rect x="14.5" y="14.5" width="9.5" height="9.5" rx="1.2" fill="#c9b735"/><path d="M19.25,15.8 v6.9 M15.8,19.25 h6.9 M16.5,16.5 l5.5,5.5 M22,16.5 l-5.5,5.5" stroke="#fff" stroke-width="1.3" fill="none"/></svg>
<svg class="abs" style="left:17.5px;top:547px" width="24" height="24" viewBox="0 0 24 24"><rect x="1" y="1" width="20" height="20" rx="1.500" fill="#4a72a8" stroke="#34507a" stroke-width="1"/><g fill="#f4f8fc"><rect x="6.500" y="6" width="3.800" height="3"/><rect x="11.500" y="6" width="3.800" height="3"/><rect x="16.300" y="6" width="3.800" height="3"/><rect x="6.500" y="10.500" width="3.800" height="3"/><rect x="11.500" y="10.500" width="3.800" height="3"/><rect x="16.300" y="10.500" width="3.800" height="3"/><rect x="6.500" y="15" width="3.800" height="3"/><rect x="11.500" y="15" width="3.800" height="3"/></g><rect x="14.5" y="14.5" width="9.5" height="9.5" rx="2" fill="#5a9a58" stroke="#4a8448" stroke-width=".6"/><path d="M19.25,16.1 v6.3 M16.1,19.25 h6.3" stroke="#fff" stroke-width="2.2" fill="none"/></svg>
<svg class="abs" style="left:40.5px;top:405.722px" width="10" height="5.55556" viewBox="0 0 9 5"><path d="M0,0h9l-4.500,5z" fill="#000"/></svg>
<svg class="abs" style="left:40.5px;top:436.022px" width="10" height="5.55556" viewBox="0 0 9 5"><path d="M0,0h9l-4.500,5z" fill="#000"/></svg>
<svg class="abs" style="left:40.5px;top:496.722px" width="10" height="5.55556" viewBox="0 0 9 5"><path d="M0,0h9l-4.500,5z" fill="#000"/></svg>
<svg class="abs" style="left:40.5px;top:526.222px" width="10" height="5.55556" viewBox="0 0 9 5"><path d="M0,0h9l-4.500,5z" fill="#000"/></svg>
<div class="abs" id="lyhead"></div>
<span class="tx " style="left:60.5px;top:210.5px;height:20px;line-height:20px;font-size:15.500px;letter-spacing:-0.256px;">Layer</span>
<svg class="abs" style="left:360px;top:207px" width="46" height="24" viewBox="0 0 46 24"><path d="M7,3.500h9.500v9.500h-3" fill="none" stroke="#333" stroke-width="1.800"/><path d="M6.500,4.500h10" stroke="#333" stroke-width="2.600"/><rect x="3" y="9" width="9.500" height="9.500" fill="none" stroke="#333" stroke-width="1.800"/><path d="M2.500,10h10.500" stroke="#333" stroke-width="2.600"/><path d="M28.500,5l13,13M41.500,5l-13,13" stroke="#333" stroke-width="3"/></svg>
<svg class="abs" style="left:60px;top:240.8px" width="16" height="16" viewBox="0 0 18 18"><path d="M16,2 L10,9" stroke="#e8a030" stroke-width="2.600" stroke-linecap="round"/><path d="M2,11 L8,5 L13,10 L7,16z" fill="#e8c040"/><path d="M2,11 L4,9 L9,14 L7,16z" fill="#d84838"/><path d="M4,9 L6,7 L11,12 L9,14z" fill="#e8a030"/></svg>
<svg class="abs" style="left:83px;top:240.8px" width="16" height="16" viewBox="0 0 18 18"><path d="M0.600,11.700 V17.400 H7.300" fill="none" stroke="#8e949c" stroke-width="1"/><path d="M5.500,2.600 H16.400 V13 H5.500z" fill="#f2f5f8" stroke="#8e949c" stroke-width="1"/><path d="M3.300,5 H13.500 V15.200 H3.300z" fill="#dde7f1" stroke="#8e949c" stroke-width="1"/><path d="M8.300,6.500 v4.800 a1.650,1.650 0 0 0 3.300,0 v-4.800" fill="none" stroke="#46566a" stroke-width="1.150"/><path d="M9.950,10.300 V2.200 a1.300,1.500 0 0 0 -1.600,-1.400" fill="none" stroke="#6a7a8c" stroke-width=".9"/><circle cx="13.500" cy="14" r="3" fill="#fff" stroke="#5a9a58" stroke-width="1.600"/></svg>
<svg class="abs" style="left:107px;top:240.8px" width="16" height="16" viewBox="0 0 18 18"><path d="M1,8 C4,2.500 12,2.500 15,8 C12,13 4,13 1,8z" fill="#f4f4f4" stroke="#888" stroke-width="1"/><circle cx="8" cy="7.500" r="3.300" fill="#5a7aa8"/><circle cx="8" cy="7.500" r="1.400" fill="#111"/><path d="M9,12.500h8l-4,4.500z" fill="#000"/></svg>
<svg class="abs" style="left:129px;top:240.8px" width="16" height="16" viewBox="0 0 18 18"><path d="M1,2 h16 v2.500 l-6,6 v6.500 h-4 v-6.500 l-6,-6z" fill="#5a96d0" stroke="#3a6aa0" stroke-width=".8"/><rect x="1" y="1.500" width="16" height="2" fill="#e8d040"/></svg>
<svg class="abs" style="left:153px;top:240.8px" width="16" height="16" viewBox="0 0 18 18"><text x="0" y="12" font-size="17" font-family="Liberation Serif,serif" fill="#7a2a8a">ε</text><path d="M8,10 h7 v8 h-2 v-4 h-3 v4 h-2z" fill="#bbb" stroke="#888" stroke-width=".6"/></svg>
<svg class="abs" style="left:190.5px;top:240.8px" width="16" height="16" viewBox="0 0 18 18"><path d="M2,1v15M2,4h3M2,9h3M2,14h3" stroke="#999" stroke-width=".8" stroke-dasharray="1 1"/><rect x="4" y="2.500" width="3" height="3" fill="#f0b040"/><rect x="4" y="7.500" width="3" height="3" fill="#f0b040"/><rect x="4" y="12.500" width="3" height="3" fill="#f0b040"/><path d="M12,2 v-0 M9.500,1.500 h5 v8 h3 l-5.500,6.500 l-5.500,-6.500 h3z" fill="#4a86c8" stroke="#2a5a98" stroke-width=".7"/></svg>
<svg class="abs" style="left:214px;top:240.8px" width="16" height="16" viewBox="0 0 18 18"><path d="M2,1v15M2,4h3M2,9h3M2,14h3" stroke="#999" stroke-width=".8" stroke-dasharray="1 1"/><rect x="4" y="2.500" width="3" height="3" fill="#f0b040"/><rect x="4" y="7.500" width="3" height="3" fill="#f0b040"/><rect x="4" y="12.500" width="3" height="3" fill="#f0b040"/><path d="M9.500,16.500 h5 v-8 h3 l-5.500,-6.500 l-5.500,6.500 h3z" fill="#4a86c8" stroke="#2a5a98" stroke-width=".7"/></svg>
<svg class="abs" style="left:236px;top:240.8px" width="16" height="16" viewBox="0 0 18 18"><rect x="2" y="2" width="11" height="11" fill="#f8f8f8" stroke="#777" stroke-width="1"/><rect x="10" y="11" width="6.500" height="4.500" rx="1" fill="#d83848"/><path d="M11.500,13.200h3.500" stroke="#fff" stroke-width="1.200"/></svg>
<svg class="abs" style="left:175px;top:246.5px" width="9" height="5" viewBox="0 0 9 5"><path d="M0,0h9l-4.500,5z" fill="#000"/></svg>
<div class="abs" id="tree"></div>
<div class="abs" style="left:130.500px;top:432px;width:277.500px;height:23px;background:#cce8ff"></div><div class="abs" style="left:155px;top:431.500px;width:254px;height:23.500px;border-top:1px dotted #222;border-bottom:1px dotted #222;border-left:1px dotted #222"></div>
<div class="abs" style="left:82px;top:624px;width:321px;height:23px;background:#e5f3ff"></div>
<div class="abs" id="treeclip">
<svg class="abs" style="left:62px;top:271.5px" width="12" height="8" viewBox="0 0 12 8"><path d="M1,1.200 L6,6.200 L11,1.200" fill="none" stroke="#333" stroke-width="1.600"/></svg>
<div class="abs cb" style="left:84px;top:267px"></div><svg class="abs" style="left:84px;top:267px" width="16" height="16" viewBox="0 0 16 16"><path d="M3,8.200 L6.400,11.600 L13,4.200" fill="none" stroke="#222" stroke-width="1.300"/></svg>
<svg class="abs" style="left:107px;top:266px" width="18" height="18" viewBox="0 0 18 18"><path d="M0.600,11.700 V17.400 H7.300" fill="none" stroke="#8e949c" stroke-width="1"/><path d="M5.500,2.600 H16.400 V13 H5.500z" fill="#f2f5f8" stroke="#8e949c" stroke-width="1"/><path d="M3.300,5 H13.500 V15.200 H3.300z" fill="#dde7f1" stroke="#8e949c" stroke-width="1"/><path d="M8.300,6.500 v4.800 a1.650,1.650 0 0 0 3.300,0 v-4.800" fill="none" stroke="#46566a" stroke-width="1.150"/><path d="M9.950,10.300 V2.200 a1.300,1.500 0 0 0 -1.600,-1.400" fill="none" stroke="#6a7a8c" stroke-width=".9"/></svg>
<span class="tx " style="left:132.5px;top:265.5px;height:20px;line-height:20px;font-size:15px;letter-spacing:-0.455px;">Gebiet_und_Wege</span>
<svg class="abs" style="left:90px;top:293px" width="8" height="12" viewBox="0 0 8 12"><path d="M1.200,1 L6.200,6 L1.200,11" fill="none" stroke="#999" stroke-width="1.500"/></svg>
<div class="abs cb" style="left:109px;top:291px"></div><svg class="abs" style="left:109px;top:291px" width="16" height="16" viewBox="0 0 16 16"><path d="M3,8.200 L6.400,11.600 L13,4.200" fill="none" stroke="#222" stroke-width="1.300"/></svg>
<svg class="abs" style="left:132px;top:290px" width="18" height="18" viewBox="0 0 18 18"><path d="M0.600,11.700 V17.400 H7.300" fill="none" stroke="#8e949c" stroke-width="1"/><path d="M5.500,2.600 H16.400 V13 H5.500z" fill="#f2f5f8" stroke="#8e949c" stroke-width="1"/><path d="M3.300,5 H13.500 V15.200 H3.300z" fill="#dde7f1" stroke="#8e949c" stroke-width="1"/><path d="M8.300,6.500 v4.800 a1.650,1.650 0 0 0 3.300,0 v-4.800" fill="none" stroke="#46566a" stroke-width="1.150"/><path d="M9.950,10.300 V2.200 a1.300,1.500 0 0 0 -1.600,-1.400" fill="none" stroke="#6a7a8c" stroke-width=".9"/></svg>
<span class="tx " style="left:157.5px;top:289.5px;height:20px;line-height:20px;font-size:15px;letter-spacing:-0.766px;">Strasse</span>
<svg class="abs" style="left:87px;top:319.5px" width="12" height="8" viewBox="0 0 12 8"><path d="M1,1.200 L6,6.200 L11,1.200" fill="none" stroke="#333" stroke-width="1.600"/></svg>
<div class="abs cb" style="left:109px;top:315px"></div><svg class="abs" style="left:109px;top:315px" width="16" height="16" viewBox="0 0 16 16"><path d="M3,8.200 L6.400,11.600 L13,4.200" fill="none" stroke="#222" stroke-width="1.300"/></svg>
<svg class="abs" style="left:132px;top:314px" width="18" height="18" viewBox="0 0 18 18"><path d="M0.600,11.700 V17.400 H7.300" fill="none" stroke="#8e949c" stroke-width="1"/><path d="M5.500,2.600 H16.400 V13 H5.500z" fill="#f2f5f8" stroke="#8e949c" stroke-width="1"/><path d="M3.300,5 H13.500 V15.200 H3.300z" fill="#dde7f1" stroke="#8e949c" stroke-width="1"/><path d="M8.300,6.500 v4.800 a1.650,1.650 0 0 0 3.300,0 v-4.800" fill="none" stroke="#46566a" stroke-width="1.150"/><path d="M9.950,10.300 V2.200 a1.300,1.500 0 0 0 -1.600,-1.400" fill="none" stroke="#6a7a8c" stroke-width=".9"/></svg>
<span class="tx " style="left:157.5px;top:313.5px;height:20px;line-height:20px;font-size:15px;letter-spacing:-0.327px;">Rundweg</span>
<div class="abs cb" style="left:134px;top:339px"></div><svg class="abs" style="left:134px;top:339px" width="16" height="16" viewBox="0 0 16 16"><path d="M3,8.200 L6.400,11.600 L13,4.200" fill="none" stroke="#222" stroke-width="1.300"/></svg>
<div class="abs" style="left:156px;top:345px;width:19px;height:4px;background:#e8a020"></div>
<span class="tx " style="left:181.4px;top:337.5px;height:20px;line-height:20px;font-size:15px;font-weight:bold;letter-spacing:-0.305px;">Rundweg tracks</span>
<svg class="abs" style="left:87px;top:367.5px" width="12" height="8" viewBox="0 0 12 8"><path d="M1,1.200 L6,6.200 L11,1.200" fill="none" stroke="#333" stroke-width="1.600"/></svg>
<div class="abs cb" style="left:109px;top:363px"></div><svg class="abs" style="left:109px;top:363px" width="16" height="16" viewBox="0 0 16 16"><path d="M3,8.200 L6.400,11.600 L13,4.200" fill="none" stroke="#222" stroke-width="1.300"/></svg>
<svg class="abs" style="left:132px;top:362px" width="18" height="18" viewBox="0 0 18 18"><path d="M0.600,11.700 V17.400 H7.300" fill="none" stroke="#8e949c" stroke-width="1"/><path d="M5.500,2.600 H16.400 V13 H5.500z" fill="#f2f5f8" stroke="#8e949c" stroke-width="1"/><path d="M3.300,5 H13.500 V15.200 H3.300z" fill="#dde7f1" stroke="#8e949c" stroke-width="1"/><path d="M8.300,6.500 v4.800 a1.650,1.650 0 0 0 3.300,0 v-4.800" fill="none" stroke="#46566a" stroke-width="1.150"/><path d="M9.950,10.300 V2.200 a1.300,1.500 0 0 0 -1.600,-1.400" fill="none" stroke="#6a7a8c" stroke-width=".9"/></svg>
<span class="tx " style="left:157.5px;top:361.5px;height:20px;line-height:20px;font-size:15px;letter-spacing:-1.090px;">NSG_1983</span>
<div class="abs cb" style="left:134px;top:387px"></div><svg class="abs" style="left:134px;top:387px" width="16" height="16" viewBox="0 0 16 16"><path d="M3,8.200 L6.400,11.600 L13,4.200" fill="none" stroke="#222" stroke-width="1.300"/></svg>
<div class="abs" style="left:156px;top:392px;width:19px;height:6px;background:#f0e620"></div>
<span class="tx " style="left:181.4px;top:385.5px;height:20px;line-height:20px;font-size:15px;font-weight:bold;letter-spacing:-0.441px;">nsg_1983_umriss</span>
<svg class="abs" style="left:87px;top:415.5px" width="12" height="8" viewBox="0 0 12 8"><path d="M1,1.200 L6,6.200 L11,1.200" fill="none" stroke="#333" stroke-width="1.600"/></svg>
<div class="abs cb" style="left:109px;top:411px"></div><svg class="abs" style="left:109px;top:411px" width="16" height="16" viewBox="0 0 16 16"><path d="M3,8.200 L6.400,11.600 L13,4.200" fill="none" stroke="#222" stroke-width="1.300"/></svg>
<svg class="abs" style="left:132px;top:410px" width="18" height="18" viewBox="0 0 18 18"><path d="M0.600,11.700 V17.400 H7.300" fill="none" stroke="#8e949c" stroke-width="1"/><path d="M5.500,2.600 H16.400 V13 H5.500z" fill="#f2f5f8" stroke="#8e949c" stroke-width="1"/><path d="M3.300,5 H13.500 V15.200 H3.300z" fill="#dde7f1" stroke="#8e949c" stroke-width="1"/><path d="M8.300,6.500 v4.800 a1.650,1.650 0 0 0 3.300,0 v-4.800" fill="none" stroke="#46566a" stroke-width="1.150"/><path d="M9.950,10.300 V2.200 a1.300,1.500 0 0 0 -1.600,-1.400" fill="none" stroke="#6a7a8c" stroke-width=".9"/></svg>
<span class="tx " style="left:157.5px;top:409.5px;height:20px;line-height:20px;font-size:15px;letter-spacing:-0.251px;">NSG_1937 = Alter Bannwald</span>
<div class="abs cb" style="left:134px;top:435px"></div><svg class="abs" style="left:134px;top:435px" width="16" height="16" viewBox="0 0 16 16"><path d="M3,8.200 L6.400,11.600 L13,4.200" fill="none" stroke="#222" stroke-width="1.300"/></svg>
<svg class="abs" style="left:155px;top:433px" width="20" height="20" viewBox="0 0 20 20"><rect x="1" y="1" width="17" height="18" fill="#fff" stroke="#b02868" stroke-width="1.600"/><path d="M6.500,1v18M12.500,1v18" stroke="#c03048" stroke-width="1.100"/></svg>
<span class="tx " style="left:181.4px;top:433.5px;height:20px;line-height:20px;font-size:15px;font-weight:bold;text-decoration:underline;letter-spacing:-0.376px;">nsg_1937_flaeche</span>
<div class="abs cb" style="left:134px;top:459px"></div><svg class="abs" style="left:134px;top:459px" width="16" height="16" viewBox="0 0 16 16"><path d="M3,8.200 L6.400,11.600 L13,4.200" fill="none" stroke="#222" stroke-width="1.300"/></svg>
<div class="abs" style="left:156px;top:464.75px;width:19px;height:4.500px;background:#d42c34"></div>
<span class="tx " style="left:181.4px;top:457.5px;height:20px;line-height:20px;font-size:15px;font-weight:bold;letter-spacing:-0.441px;">nsg_1937_umriss</span>
<svg class="abs" style="left:65px;top:485px" width="8" height="12" viewBox="0 0 8 12"><path d="M1.200,1 L6.200,6 L1.200,11" fill="none" stroke="#999" stroke-width="1.500"/></svg>
<div class="abs cb" style="left:84px;top:483px"></div><svg class="abs" style="left:84px;top:483px" width="16" height="16" viewBox="0 0 16 16"><path d="M3,8.200 L6.400,11.600 L13,4.200" fill="none" stroke="#222" stroke-width="1.300"/></svg>
<svg class="abs" style="left:108px;top:483px" width="16.200" height="16.200" viewBox="0 0 16.200 16.200"><rect x="0" y="0" width="5.5" height="5.5" fill="#1f3a5f"/><rect x="5.4" y="0" width="5.5" height="5.5" fill="#7a9ccc"/><rect x="10.8" y="0" width="5.5" height="5.5" fill="#1f3a5f"/><rect x="0" y="5.4" width="5.5" height="5.5" fill="#7a9ccc"/><rect x="5.4" y="5.4" width="5.5" height="5.5" fill="#1f3a5f"/><rect x="10.8" y="5.4" width="5.5" height="5.5" fill="#8aa8d4"/><rect x="0" y="10.8" width="5.5" height="5.5" fill="#1f3a5f"/><rect x="5.4" y="10.8" width="5.5" height="5.5" fill="#6a8cc0"/><rect x="10.8" y="10.8" width="5.5" height="5.5" fill="#9ab4dc"/></svg>
<span class="tx " style="left:132.5px;top:481.5px;height:20px;line-height:20px;font-size:15px;font-weight:bold;letter-spacing:-0.052px;">WT_DGM1_668m</span>
<svg class="abs" style="left:65px;top:509px" width="8" height="12" viewBox="0 0 8 12"><path d="M1.200,1 L6.200,6 L1.200,11" fill="none" stroke="#999" stroke-width="1.500"/></svg>
<div class="abs cb" style="left:84px;top:507px"></div><svg class="abs" style="left:84px;top:507px" width="16" height="16" viewBox="0 0 16 16"><path d="M3,8.200 L6.400,11.600 L13,4.200" fill="none" stroke="#222" stroke-width="1.300"/></svg>
<svg class="abs" style="left:108px;top:507px" width="16.200" height="16.200" viewBox="0 0 16.200 16.200"><rect x="0" y="0" width="5.5" height="5.5" fill="#1f3a5f"/><rect x="5.4" y="0" width="5.5" height="5.5" fill="#7a9ccc"/><rect x="10.8" y="0" width="5.5" height="5.5" fill="#1f3a5f"/><rect x="0" y="5.4" width="5.5" height="5.5" fill="#7a9ccc"/><rect x="5.4" y="5.4" width="5.5" height="5.5" fill="#1f3a5f"/><rect x="10.8" y="5.4" width="5.5" height="5.5" fill="#8aa8d4"/><rect x="0" y="10.8" width="5.5" height="5.5" fill="#1f3a5f"/><rect x="5.4" y="10.8" width="5.5" height="5.5" fill="#6a8cc0"/><rect x="10.8" y="10.8" width="5.5" height="5.5" fill="#9ab4dc"/></svg>
<span class="tx " style="left:132.5px;top:505.5px;height:20px;line-height:20px;font-size:15px;font-weight:bold;letter-spacing:-0.172px;">WT_DGM1_668_5m</span>
<svg class="abs" style="left:65px;top:533px" width="8" height="12" viewBox="0 0 8 12"><path d="M1.200,1 L6.200,6 L1.200,11" fill="none" stroke="#999" stroke-width="1.500"/></svg>
<div class="abs cb" style="left:84px;top:531px"></div><svg class="abs" style="left:84px;top:531px" width="16" height="16" viewBox="0 0 16 16"><path d="M3,8.200 L6.400,11.600 L13,4.200" fill="none" stroke="#222" stroke-width="1.300"/></svg>
<svg class="abs" style="left:108px;top:531px" width="16.200" height="16.200" viewBox="0 0 16.200 16.200"><rect x="0" y="0" width="5.5" height="5.5" fill="#1f3a5f"/><rect x="5.4" y="0" width="5.5" height="5.5" fill="#7a9ccc"/><rect x="10.8" y="0" width="5.5" height="5.5" fill="#1f3a5f"/><rect x="0" y="5.4" width="5.5" height="5.5" fill="#7a9ccc"/><rect x="5.4" y="5.4" width="5.5" height="5.5" fill="#1f3a5f"/><rect x="10.8" y="5.4" width="5.5" height="5.5" fill="#8aa8d4"/><rect x="0" y="10.8" width="5.5" height="5.5" fill="#1f3a5f"/><rect x="5.4" y="10.8" width="5.5" height="5.5" fill="#6a8cc0"/><rect x="10.8" y="10.8" width="5.5" height="5.5" fill="#9ab4dc"/></svg>
<span class="tx " style="left:132.5px;top:529.5px;height:20px;line-height:20px;font-size:15px;font-weight:bold;letter-spacing:-0.043px;">WT_DGM1_669m</span>
<div class="abs cb" style="left:84px;top:555px"></div><svg class="abs" style="left:84px;top:555px" width="16" height="16" viewBox="0 0 16 16"><path d="M3,8.200 L6.400,11.600 L13,4.200" fill="none" stroke="#222" stroke-width="1.300"/></svg>
<svg class="abs" style="left:108px;top:555px" width="16.200" height="16.200" viewBox="0 0 16.200 16.200"><rect x="0" y="0" width="5.5" height="5.5" fill="#1f3a5f"/><rect x="5.4" y="0" width="5.5" height="5.5" fill="#7a9ccc"/><rect x="10.8" y="0" width="5.5" height="5.5" fill="#1f3a5f"/><rect x="0" y="5.4" width="5.5" height="5.5" fill="#7a9ccc"/><rect x="5.4" y="5.4" width="5.5" height="5.5" fill="#1f3a5f"/><rect x="10.8" y="5.4" width="5.5" height="5.5" fill="#8aa8d4"/><rect x="0" y="10.8" width="5.5" height="5.5" fill="#1f3a5f"/><rect x="5.4" y="10.8" width="5.5" height="5.5" fill="#6a8cc0"/><rect x="10.8" y="10.8" width="5.5" height="5.5" fill="#9ab4dc"/></svg>
<span class="tx " style="left:132.5px;top:553.5px;height:20px;line-height:20px;font-size:15px;font-weight:bold;letter-spacing:-0.288px;">WT_DGM1_rast</span>
<div class="abs cb" style="left:84px;top:579px"></div>
<div class="abs" style="left:111px;top:582px;width:10px;height:10px;border-radius:5px;background:#f0a030;border:1px solid #7a5a3a"></div>
<span class="tx " style="left:132.5px;top:577.5px;height:20px;line-height:20px;font-size:15px;font-weight:bold;font-style:italic;color:#808080;letter-spacing:-0.432px;">WT_DGM1_gpkg</span>
<div class="abs cb" style="left:84px;top:603px"></div>
<div class="abs" style="left:111px;top:606px;width:10px;height:10px;border-radius:5px;background:#b85050;border:1px solid #7a5a3a"></div>
<span class="tx " style="left:132.5px;top:601.5px;height:20px;line-height:20px;font-size:15px;font-weight:bold;font-style:italic;color:#808080;letter-spacing:-0.403px;">WT_DGM1_xyz</span>
<div class="abs cb" style="left:84px;top:627px"></div>
<svg class="abs" style="left:107px;top:626px" width="18" height="18" viewBox="0 0 18 18"><circle cx="9" cy="9" r="7.500" fill="#fff" stroke="#222" stroke-width="1.100"/><circle cx="9" cy="9" r="2" fill="#111"/></svg>
<span class="tx " style="left:132.5px;top:625.5px;height:20px;line-height:20px;font-size:15px;font-weight:bold;font-style:italic;color:#808080;letter-spacing:-0.238px;">Funde_WT_2017_2019</span>
<svg class="abs" style="left:65px;top:653px" width="8" height="12" viewBox="0 0 8 12"><path d="M1.200,1 L6.200,6 L1.200,11" fill="none" stroke="#999" stroke-width="1.500"/></svg>
<div class="abs cb" style="left:84px;top:651px"></div>
<svg class="abs" style="left:107px;top:650px" width="18" height="18" viewBox="0 0 18 18"><path d="M0.600,11.700 V17.400 H7.300" fill="none" stroke="#8e949c" stroke-width="1"/><path d="M5.500,2.600 H16.400 V13 H5.500z" fill="#f2f5f8" stroke="#8e949c" stroke-width="1"/><path d="M3.300,5 H13.500 V15.200 H3.300z" fill="#dde7f1" stroke="#8e949c" stroke-width="1"/><path d="M8.300,6.500 v4.800 a1.650,1.650 0 0 0 3.300,0 v-4.800" fill="none" stroke="#46566a" stroke-width="1.150"/><path d="M9.950,10.300 V2.200 a1.300,1.500 0 0 0 -1.600,-1.400" fill="none" stroke="#6a7a8c" stroke-width=".9"/></svg>
<span class="tx " style="left:132.5px;top:649.5px;height:20px;line-height:20px;font-size:15px;letter-spacing:-0.231px;">Pflanzengesellschaften</span>
<svg class="abs" style="left:65px;top:677px" width="8" height="12" viewBox="0 0 8 12"><path d="M1.200,1 L6.200,6 L1.200,11" fill="none" stroke="#999" stroke-width="1.500"/></svg>
<div class="abs cb" style="left:84px;top:675px"></div>
<svg class="abs" style="left:107px;top:674px" width="18" height="18" viewBox="0 0 18 18"><path d="M0.600,11.700 V17.400 H7.300" fill="none" stroke="#8e949c" stroke-width="1"/><path d="M5.500,2.600 H16.400 V13 H5.500z" fill="#f2f5f8" stroke="#8e949c" stroke-width="1"/><path d="M3.300,5 H13.500 V15.200 H3.300z" fill="#dde7f1" stroke="#8e949c" stroke-width="1"/><path d="M8.300,6.500 v4.800 a1.650,1.650 0 0 0 3.300,0 v-4.800" fill="none" stroke="#46566a" stroke-width="1.150"/><path d="M9.950,10.300 V2.200 a1.300,1.500 0 0 0 -1.600,-1.400" fill="none" stroke="#6a7a8c" stroke-width=".9"/></svg>
<span class="tx " style="left:132.5px;top:673.5px;height:20px;line-height:20px;font-size:15px;letter-spacing:0.161px;">Biotope</span>
<svg class="abs" style="left:65px;top:701px" width="8" height="12" viewBox="0 0 8 12"><path d="M1.200,1 L6.200,6 L1.200,11" fill="none" stroke="#999" stroke-width="1.500"/></svg>
<div class="abs cb" style="left:84px;top:699px"></div>
<svg class="abs" style="left:105px;top:699px" width="22" height="16" viewBox="0 0 22 16"><path d="M1.500,5 C2,1 7,1 10,2.500 C13,3.500 15,1 18,2 C21,4 20,9 17,10 C13,10.500 11,13 8,14 C4,15 1,10 1.500,5z" fill="#d4d4d4" stroke="#888" stroke-width="1"/></svg>
<span class="tx " style="left:132.5px;top:697.5px;height:20px;line-height:20px;font-size:15px;font-weight:bold;font-style:italic;color:#808080;letter-spacing:-0.164px;">Bodenarten</span>
<svg class="abs" style="left:65px;top:725px" width="8" height="12" viewBox="0 0 8 12"><path d="M1.200,1 L6.200,6 L1.200,11" fill="none" stroke="#999" stroke-width="1.500"/></svg>
<div class="abs cb" style="left:84px;top:723px"></div>
<svg class="abs" style="left:107px;top:722px" width="18" height="18" viewBox="0 0 18 18"><path d="M0.600,11.700 V17.400 H7.300" fill="none" stroke="#8e949c" stroke-width="1"/><path d="M5.500,2.600 H16.400 V13 H5.500z" fill="#f2f5f8" stroke="#8e949c" stroke-width="1"/><path d="M3.300,5 H13.500 V15.200 H3.300z" fill="#dde7f1" stroke="#8e949c" stroke-width="1"/><path d="M8.300,6.500 v4.800 a1.650,1.650 0 0 0 3.300,0 v-4.800" fill="none" stroke="#46566a" stroke-width="1.150"/><path d="M9.950,10.300 V2.200 a1.300,1.500 0 0 0 -1.600,-1.400" fill="none" stroke="#6a7a8c" stroke-width=".9"/></svg>
<span class="tx " style="left:132.5px;top:721.5px;height:20px;line-height:20px;font-size:15px;letter-spacing:-0.107px;">Baumfreie_offene_Moorbereiche</span>
<svg class="abs" style="left:62px;top:751.5px" width="12" height="8" viewBox="0 0 12 8"><path d="M1,1.200 L6,6.200 L11,1.200" fill="none" stroke="#333" stroke-width="1.600"/></svg>
<div class="abs cb" style="left:84px;top:747px"></div>
<svg class="abs" style="left:108px;top:747px" width="16.200" height="16.200" viewBox="0 0 16.200 16.200"><rect x="0" y="0" width="5.5" height="5.5" fill="#1f3a5f"/><rect x="5.4" y="0" width="5.5" height="5.5" fill="#7a9ccc"/><rect x="10.8" y="0" width="5.5" height="5.5" fill="#1f3a5f"/><rect x="0" y="5.4" width="5.5" height="5.5" fill="#7a9ccc"/><rect x="5.4" y="5.4" width="5.5" height="5.5" fill="#1f3a5f"/><rect x="10.8" y="5.4" width="5.5" height="5.5" fill="#8aa8d4"/><rect x="0" y="10.8" width="5.5" height="5.5" fill="#1f3a5f"/><rect x="5.4" y="10.8" width="5.5" height="5.5" fill="#6a8cc0"/><rect x="10.8" y="10.8" width="5.5" height="5.5" fill="#9ab4dc"/></svg>
<span class="tx " style="left:132.5px;top:745.5px;height:20px;line-height:20px;font-size:15px;font-weight:bold;font-style:italic;color:#808080;letter-spacing:-0.097px;">OpenStreetMap Standard</span>
<svg class="abs" style="left:65px;top:773px" width="8" height="12" viewBox="0 0 8 12"><path d="M1.200,1 L6.200,6 L1.200,11" fill="none" stroke="#999" stroke-width="1.500"/></svg>
<div class="abs cb" style="left:84px;top:771px"></div>
<svg class="abs" style="left:108px;top:771px" width="16.200" height="16.200" viewBox="0 0 16.200 16.200"><rect x="0" y="0" width="5.5" height="5.5" fill="#1f3a5f"/><rect x="5.4" y="0" width="5.5" height="5.5" fill="#7a9ccc"/><rect x="10.8" y="0" width="5.5" height="5.5" fill="#1f3a5f"/><rect x="0" y="5.4" width="5.5" height="5.5" fill="#7a9ccc"/><rect x="5.4" y="5.4" width="5.5" height="5.5" fill="#1f3a5f"/><rect x="10.8" y="5.4" width="5.5" height="5.5" fill="#8aa8d4"/><rect x="0" y="10.8" width="5.5" height="5.5" fill="#1f3a5f"/><rect x="5.4" y="10.8" width="5.5" height="5.5" fill="#6a8cc0"/><rect x="10.8" y="10.8" width="5.5" height="5.5" fill="#9ab4dc"/></svg>
<span class="tx " style="left:132.5px;top:769.5px;height:20px;line-height:20px;font-size:15px;font-weight:bold;font-style:italic;color:#808080;letter-spacing:-.28px;">WMS LGRB-BW BK50: Bodenkarte 1 : 50000</span>
<svg class="abs" style="left:65px;top:797px" width="8" height="12" viewBox="0 0 8 12"><path d="M1.200,1 L6.200,6 L1.200,11" fill="none" stroke="#999" stroke-width="1.500"/></svg>
<div class="abs cb" style="left:84px;top:795px"></div>
<svg class="abs" style="left:108px;top:795px" width="16.200" height="16.200" viewBox="0 0 16.200 16.200"><rect x="0" y="0" width="5.5" height="5.5" fill="#1f3a5f"/><rect x="5.4" y="0" width="5.5" height="5.5" fill="#7a9ccc"/><rect x="10.8" y="0" width="5.5" height="5.5" fill="#1f3a5f"/><rect x="0" y="5.4" width="5.5" height="5.5" fill="#7a9ccc"/><rect x="5.4" y="5.4" width="5.5" height="5.5" fill="#1f3a5f"/><rect x="10.8" y="5.4" width="5.5" height="5.5" fill="#8aa8d4"/><rect x="0" y="10.8" width="5.5" height="5.5" fill="#1f3a5f"/><rect x="5.4" y="10.8" width="5.5" height="5.5" fill="#6a8cc0"/><rect x="10.8" y="10.8" width="5.5" height="5.5" fill="#9ab4dc"/></svg>
<span class="tx " style="left:132.5px;top:793.5px;height:20px;line-height:20px;font-size:15px;font-weight:bold;font-style:italic;color:#808080;letter-spacing:-.28px;">WMS LGRB-BW GK50: Geologische Karte</span>
</div>
<div class="abs" style="left:70.500px;top:473px;width:205px;height:33.500px;border:3px solid #c81414;background:#fff"></div>
<div class="abs cb" style="left:84px;top:483px"></div><svg class="abs" style="left:84px;top:483px" width="16" height="16" viewBox="0 0 16 16"><path d="M3,8.200 L6.400,11.600 L13,4.200" fill="none" stroke="#222" stroke-width="1.300"/></svg>
<svg class="abs" style="left:108px;top:483px" width="16.200" height="16.200" viewBox="0 0 16.200 16.200"><rect x="0" y="0" width="5.5" height="5.5" fill="#1f3a5f"/><rect x="5.4" y="0" width="5.5" height="5.5" fill="#7a9ccc"/><rect x="10.8" y="0" width="5.5" height="5.5" fill="#1f3a5f"/><rect x="0" y="5.4" width="5.5" height="5.5" fill="#7a9ccc"/><rect x="5.4" y="5.4" width="5.5" height="5.5" fill="#1f3a5f"/><rect x="10.8" y="5.4" width="5.5" height="5.5" fill="#8aa8d4"/><rect x="0" y="10.8" width="5.5" height="5.5" fill="#1f3a5f"/><rect x="5.4" y="10.8" width="5.5" height="5.5" fill="#6a8cc0"/><rect x="10.8" y="10.8" width="5.5" height="5.5" fill="#9ab4dc"/></svg>
<span class="tx " style="left:132.5px;top:481.5px;height:20px;line-height:20px;font-size:15px;font-weight:bold;letter-spacing:-0.052px;">WT_DGM1_668m</span>
<div class="abs" id="indic"></div>
<div class="abs" id="hsb"><div class="abs" style="left:21px;top:0px;width:217px;height:20px;background:#cdcdcd"></div><svg class="abs" style="left:0;top:0" width="352" height="20" viewBox="0 0 352 20"><path d="M12.500,5.500 L8,10 L12.500,14.500 M339,5.500 L343.500,10 L339,14.500" fill="none" stroke="#3c3c3c" stroke-width="2.100"/></svg></div>
<div class="abs" id="map"><svg class="abs" style="left:-415px;top:-203px" width="1724" height="1032" viewBox="0 0 1724 1032">
<defs><pattern id="hatch" patternUnits="userSpaceOnUse" x="651" y="0" width="8" height="10"><rect x="0" y="0" width="1.100" height="10" fill="#dc463e"/></pattern>
<clipPath id="cp1937"><polygon points="650,807 888,567 940,596 1158,510 1187,598 1180,705 1172,764 1113,783 871,812 767,824 704,828 658,828"/></clipPath></defs>
<polygon fill="#000" points="503.0,460.0 939.0,226.0 1211.0,329.5 1204.3,330.0 1199.1,331.4 1192.6,333.8 1185.0,335.9 1178.8,337.2 1174.0,339.0 1166.7,338.1 1161.8,340.6 1156.0,340.0 1147.9,342.2 1142.0,346.0 1142.7,354.1 1142.9,359.0 1143.0,366.0 1148.0,371.0 1151.1,378.3 1152.4,384.3 1157.0,392.0 1159.5,398.3 1162.2,402.9 1166.7,407.5 1169.6,411.8 1171.1,417.6 1176.2,423.6 1178.1,429.4 1181.7,433.8 1185.8,440.3 1188.0,445.0 1192.2,450.5 1198.1,456.7 1203.7,460.1 1208.0,466.0 1212.5,471.4 1213.7,480.2 1217.0,486.0 1217.4,492.0 1220.0,498.0 1215.9,504.9 1215.5,510.9 1212.0,517.0 1219.2,519.4 1224.0,523.0 1233.0,526.0 1234.6,533.6 1235.3,540.5 1236.0,548.0 1246.0,542.0 1254.1,545.4 1259.9,546.5 1267.0,548.0 1271.9,551.6 1280.1,555.6 1286.0,557.0 1293.0,559.3 1297.6,563.5 1304.0,566.0 1309.0,564.4 1317.0,563.0 1320.7,565.8 1325.1,571.9 1330.1,574.2 1336.0,579.0 1342.2,583.7 1347.7,585.8 1355.7,590.7 1362.0,593.0 1368.8,597.9 1372.8,600.2 1378.8,605.5 1385.0,608.0 1392.0,610.4 1396.0,615.0 1398.6,609.1 1402.5,605.0 1407.0,600.0 1414.6,598.2 1420.1,597.7 1429.0,597.0 1434.1,600.7 1440.0,604.0 1448.7,606.4 1454.5,607.9 1462.3,607.8 1469.0,611.0 1476.6,613.2 1482.9,614.6 1488.0,615.0 1493.4,629.9 1499.0,645.0 1502.9,657.6 1507.3,669.3 1511.9,681.8 1516.4,694.1 1521.0,707.0 1524.9,719.6 1529.5,732.8 1533.9,746.4 1539.0,759.0 1544.8,773.2 1550.0,788.2 1556.0,803.0 1554.7,809.6 1554.0,818.0 1543.0,822.0 1540.3,829.2 1536.0,834.0 1530.9,837.6 1525.0,840.4 1521.0,845.0 1523.6,851.4 1527.8,858.2 1530.0,866.0 1536.0,875.0 1541.9,877.1 1550.0,877.0 1558.0,878.5 1564.1,881.8 1570.1,885.7 1576.0,891.0 1582.4,896.5 1589.5,900.1 1595.0,904.0 1597.0,913.0 1050.0,970.0 617.0,975.0 619.8,970.1 623.3,967.3 628.5,962.9 631.5,956.3 636.0,953.0 640.6,951.2 644.2,946.7 647.4,942.7 648.4,938.1 652.3,932.4 654.4,929.6 658.7,927.5 663.0,923.0 668.7,918.9 672.5,917.2 676.4,910.9 677.3,906.5 681.1,902.5 686.6,901.5 690.0,896.0 695.0,890.6 697.9,886.5 701.0,880.0 703.3,875.9 710.6,871.6 714.0,865.7 717.0,861.0 720.4,857.5 725.7,852.9 731.0,847.0 729.9,841.6 725.0,837.0 728.6,835.8 733.0,831.0 739.3,829.1 742.4,828.5 750.9,830.5 753.3,830.0 762.1,828.8 765.0,827.8 771.0,827.0 771.0,826.0 775.4,820.2 782.8,817.0 787.0,812.0 786.8,806.9 786.3,800.6 786.9,792.9 785.3,786.9 784.9,781.5 784.7,774.9 785.0,769.0 780.1,764.5 777.0,758.0 770.0,758.9 764.0,761.0 757.0,762.0 750.6,762.1 744.0,763.0 740.4,766.8 736.5,772.2 733.0,778.0 731.1,785.3 730.8,791.1 731.4,797.8 729.7,804.3 729.6,811.5 727.8,817.6 728.0,824.0 720.7,824.3 715.3,825.7 708.0,826.5 700.6,826.9 693.0,826.0 693.0,819.2 691.3,812.7 690.0,806.0 691.0,798.5 692.0,790.0 694.4,782.6 697.0,775.0 686.0,772.0 679.9,777.6 674.0,781.0 669.2,780.9 663.0,778.0 659.1,778.6 652.2,782.6 647.7,781.2 641.0,784.0 634.2,784.9 628.6,785.4 623.2,788.0 620.3,790.0 612.6,790.5 609.0,789.6 603.0,792.0 598.9,795.0 591.1,796.2 586.3,795.8 583.0,798.3 574.6,798.2 570.5,799.1 565.0,801.0 560.2,804.0 558.5,806.6 554.0,812.0 550.4,815.6 544.7,819.0 543.0,823.4 537.2,828.9 535.0,831.0 531.7,836.4 524.9,837.5 522.0,842.0 472.0,777.0 489.0,600.0 503.0,460.0"/>
<ellipse cx="1527" cy="890" rx="12" ry="4.5" transform="rotate(-20 1527 890)" fill="#fff"/>
<path d="M793,780 l10,-5 l8,-6 l12,-6 l6,-1 l-4,4 l-10,4 l-8,7 l-10,6 z" fill="#fff"/>
<path d="M699,776 l5,-5 l3,2 l-4,6z M706,782 l6,-4 l2,3 l-6,4z M719,772 l3,-1 l0,4 l-3,0z M711,752 l2,-2 l2,3 l-2,2z" fill="#fff"/>
<path d="M664,812 l6,-1 l1,3 l-6,1z M676,806 l7,-2 l1,3 l-7,2z M672,818 l3,0 l0,3 l-3,0z M655,808 l3,1 l-1,3z" fill="#000"/>
<circle cx="1439" cy="594" r="2" fill="#000"/><circle cx="1230" cy="516" r="1.5" fill="#000"/>
<path d="M712,860 l5,-3 l2,4 l-5,3z M722,852 l4,-2 l1,3 l-4,2z M705,872 l4,-2 l1,3 l-4,2z M693,885 l4,-2 l1,3 l-4,2z" fill="#000"/>
<rect x="640" y="500" width="560" height="340" fill="url(#hatch)" clip-path="url(#cp1937)"/>
<polyline fill="none" stroke="#f4ee22" stroke-width="1.3" points="931,273 1124,348"/>
<polyline fill="none" stroke="#f4ee22" stroke-width="6.200" stroke-linejoin="round" stroke-linecap="butt" points="1124,343 1132.5,323 1154,342 1178,343.5 1335,404 1373,408.5 1348,474 1321,557 1308,567"/>
<polyline fill="none" stroke="#f4ee22" stroke-width="1.6" points="1303,563 1356,630"/>
<polyline fill="none" stroke="#f4ee22" stroke-width="3.2" points="1355,628 1493,763"/>
<polyline fill="none" stroke="#f4ee22" stroke-width="6.400" stroke-linejoin="round" points="1493,763 1066,948 1000,941 828,921 814,894 613,948 477,777 559,631 545,473 931,273.5"/>
<polyline fill="none" stroke="#f3a42a" stroke-width="3.900" stroke-linejoin="round" points="1209,473 1106,425 1069,415 1051,430 991,529 987,590 883,705 815,747 786,769 793,808 871,806 1355,628.5"/>
<polygon fill="none" stroke="#e0242e" stroke-width="3.900" stroke-linejoin="miter" points="650,807 888,567 940,596 1158,510 1187,598 1180,705 1172,764 1113,783 871,812 767,824 704,828 658,828"/>
<polyline fill="none" stroke="#000" stroke-width="6" stroke-linejoin="round" points="1131,344 1159,372 1230,492 1292,557 1313,579"/>
<path fill="none" stroke="#000" stroke-width="5" d="M1541,822 C1550,836 1555,848 1555,860 L1555,878"/>
<text x="877" y="808" font-size="14" fill="#2a0808" transform="rotate(-14 877 808)" font-family="Liberation Sans,sans-serif">nsg 1937</text>
<path fill="none" stroke="#f01414" stroke-width="3.100" d="M871,494 C850,565 770,630 704,697 C664,745 644,790 639.500,830"/>
<polygon fill="#f01414" points="635.7,851.5 630.5,826 638.5,830.5 645,827.5"/>
<path fill="none" stroke="#f01414" stroke-width="3.100" d="M953,473 C1010,470 1060,492 1120,520 C1160,537 1190,538 1214,534"/>
<polygon fill="#f01414" points="1233,526.5 1208,526 1214,533.5 1211,541"/>
<rect x="774" y="454" width="179" height="39" rx="7" fill="#ffff8c"/>
<text x="862" y="479" text-anchor="middle" font-size="19.5" font-weight="bold" font-family="Liberation Sans,sans-serif" fill="#000">weiß &lt; 668 mNN</text>
<rect x="825.5" y="912.5" width="180" height="43" rx="8" fill="#ffff8c"/>
<text x="913" y="941" text-anchor="middle" font-size="23" font-weight="bold" font-family="Liberation Sans,sans-serif" fill="#000">Bild 8</text>
</svg></div>
<div class="abs" id="status"></div>
<div class="abs box" style="left:9px;top:1003.500px;width:279px;height:21px"></div>
<svg class="abs" style="left:17px;top:1006px" width="15" height="15" viewBox="0 0 15 15"><circle cx="6" cy="6" r="4.300" fill="none" stroke="#777" stroke-width="1.200"/><path d="M9,9.200l4.500,4.500" stroke="#777" stroke-width="1.300"/></svg>
<span class="tx " style="left:37.5px;top:1005px;height:20px;line-height:20px;font-size:13.500px;color:#7a7a7a;letter-spacing:-0.289px;">Zu suchender Typ (Strg+K)</span>
<span class="tx " style="left:729px;top:1005px;height:20px;line-height:20px;font-size:13.500px;letter-spacing:-0.531px;">Koordinate</span>
<div class="abs box" style="left:793.500px;top:1003.500px;width:110px;height:21px"></div>
<span class="tx " style="left:800px;top:1005px;height:20px;line-height:20px;font-size:13.500px;letter-spacing:-0.383px;">473893,5397217</span>
<svg class="abs" style="left:906px;top:1002.5px" width="22" height="22" viewBox="0 0 24 24"><ellipse cx="11" cy="13" rx="5.500" ry="7.500" fill="#fff" stroke="#222" stroke-width="1.600" transform="rotate(-25 11 13)"/><path d="M6,9 l8,-3" stroke="#222" stroke-width="1.300"/><path d="M3,3 l4,3 M2,8h3 M8,1v3" stroke="#222" stroke-width="1.200"/><path d="M15,3 l4,-1 M17,7 l3,0" stroke="#222" stroke-width="1"/><circle cx="12" cy="15" r="2" fill="#222"/></svg>
<span class="tx " style="left:940.5px;top:1005px;height:20px;line-height:20px;font-size:13.500px;letter-spacing:-0.862px;">Maßstab</span>
<div class="abs box" style="left:991px;top:1003.500px;width:90.500px;height:21px"></div>
<span class="tx " style="left:996px;top:1005px;height:20px;line-height:20px;font-size:13.500px;letter-spacing:-0.299px;">1:5500</span>
<svg class="abs" style="left:1065px;top:1010px" width="12" height="8" viewBox="0 0 12 8"><path d="M1,1.200 L6,6.200 L11,1.200" fill="none" stroke="#444" stroke-width="1.200"/></svg>
<svg class="abs" style="left:1089.5px;top:1001.5px" width="23" height="23" viewBox="0 0 24 24"><path d="M6.500,11 V7.500 a4.500,4.500 0 0 1 9,0 V11" fill="none" stroke="#888" stroke-width="2"/><rect x="4" y="10.500" width="14" height="10.500" rx="1.200" fill="#777"/></svg>
<span class="tx " style="left:1118px;top:1005px;height:20px;line-height:20px;font-size:13.500px;letter-spacing:-0.380px;">Vergrößerung</span>
<div class="abs box" style="left:1200px;top:1003.500px;width:86px;height:21px"></div>
<span class="tx " style="left:1203.5px;top:1005px;height:20px;line-height:20px;font-size:13.500px;letter-spacing:-0.508px;">100%</span>
<div class="abs" style="left:1271px;top:1004.500px;width:14px;height:19px;background:#e1e1e1;border:1px solid #adadad"></div><svg class="abs" style="left:1271px;top:1004.500px" width="14" height="19" viewBox="0 0 14 19"><path d="M3.500,7.500h7l-3.500,-4z M3.500,11.500h7l-3.500,4z" fill="#111"/><path d="M0,9.500h14" stroke="#adadad"/></svg>
<span class="tx " style="left:1296px;top:1005px;height:20px;line-height:20px;font-size:13.500px;letter-spacing:-0.614px;">Drehung</span>
<div class="abs box" style="left:1353px;top:1003.500px;width:83px;height:21px"></div>
<span class="tx " style="left:1356px;top:1005px;height:20px;line-height:20px;font-size:13.500px;letter-spacing:0.116px;">0,0 °</span>
<div class="abs" style="left:1421px;top:1004.500px;width:14px;height:19px;background:#e1e1e1;border:1px solid #adadad"></div><svg class="abs" style="left:1421px;top:1004.500px" width="14" height="19" viewBox="0 0 14 19"><path d="M3.500,7.500h7l-3.500,-4z M3.500,11.500h7l-3.500,4z" fill="#111"/><path d="M0,9.500h14" stroke="#adadad"/></svg>
<div class="abs cb" style="left:1444px;top:1006px"></div><svg class="abs" style="left:1444px;top:1006px" width="16" height="16" viewBox="0 0 16 16"><path d="M3,8.200 L6.400,11.600 L13,4.200" fill="none" stroke="#222" stroke-width="1.300"/></svg>
<span class="tx " style="left:1466.5px;top:1005px;height:20px;line-height:20px;font-size:13.500px;letter-spacing:-0.693px;">Zeichnen</span>
<svg class="abs" style="left:1534px;top:1004px" width="21" height="21" viewBox="0 0 24 24"><path d="M11,2 L20.500,10 C18,18 13,20 11,20.500 C9,20 4,18 1.500,10z" fill="#f4f4f4" stroke="#666" stroke-width="1.100"/><path d="M1.500,10h19M4,6h14M4,14.500h14M11,2v18.500M11,2C6,8 6,15 11,20.500M11,2C16,8 16,15 11,20.500" fill="none" stroke="#666" stroke-width=".9"/></svg>
<span class="tx " style="left:1558.5px;top:1005px;height:20px;line-height:20px;font-size:13.500px;letter-spacing:-0.931px;">EPSG:25832</span>
<svg class="abs" style="left:1645.5px;top:1003.5px" width="22" height="22" viewBox="0 0 24 24"><ellipse cx="11" cy="10" rx="10" ry="8" fill="#555"/><path d="M12,17 l6,5 l-1,-7z" fill="#555"/><circle cx="6.500" cy="10" r="1.500" fill="#fff"/><circle cx="11" cy="10" r="1.500" fill="#fff"/><circle cx="15.500" cy="10" r="1.500" fill="#fff"/></svg>
<svg class="abs" style="left:1678.5px;top:1002px" width="23" height="23" viewBox="0 0 24 24"><path d="M2,9 h5 a2.500,2.500 0 1 1 5,0 h4 v4 a2.500,2.500 0 1 0 0,5 v3 h-14 l6,-6z" fill="#bbb" stroke="#777" stroke-width="1"/><path d="M15,5 C18,1 22,3 21,7 C20,10 19,12 20,15" fill="none" stroke="#999" stroke-width="1.400"/></svg>
<svg class="abs" style="left:1706px;top:1014px" width="14" height="14" viewBox="0 0 14 14"><g fill="#bdbdbd"><rect x="10" y="1" width="2.500" height="2.500"/><rect x="6" y="5" width="2.500" height="2.500"/><rect x="10" y="5" width="2.500" height="2.500"/><rect x="2" y="9" width="2.500" height="2.500"/><rect x="6" y="9" width="2.500" height="2.500"/><rect x="10" y="9" width="2.500" height="2.500"/></g></svg>
<div class="abs" id="deskL"></div><div class="abs" id="deskL2"></div><div class="abs" id="deskT"></div><div class="abs" id="deskR"></div><div class="abs" id="deskR2"></div><div class="abs" id="deskB"></div>
</body>
</html>
